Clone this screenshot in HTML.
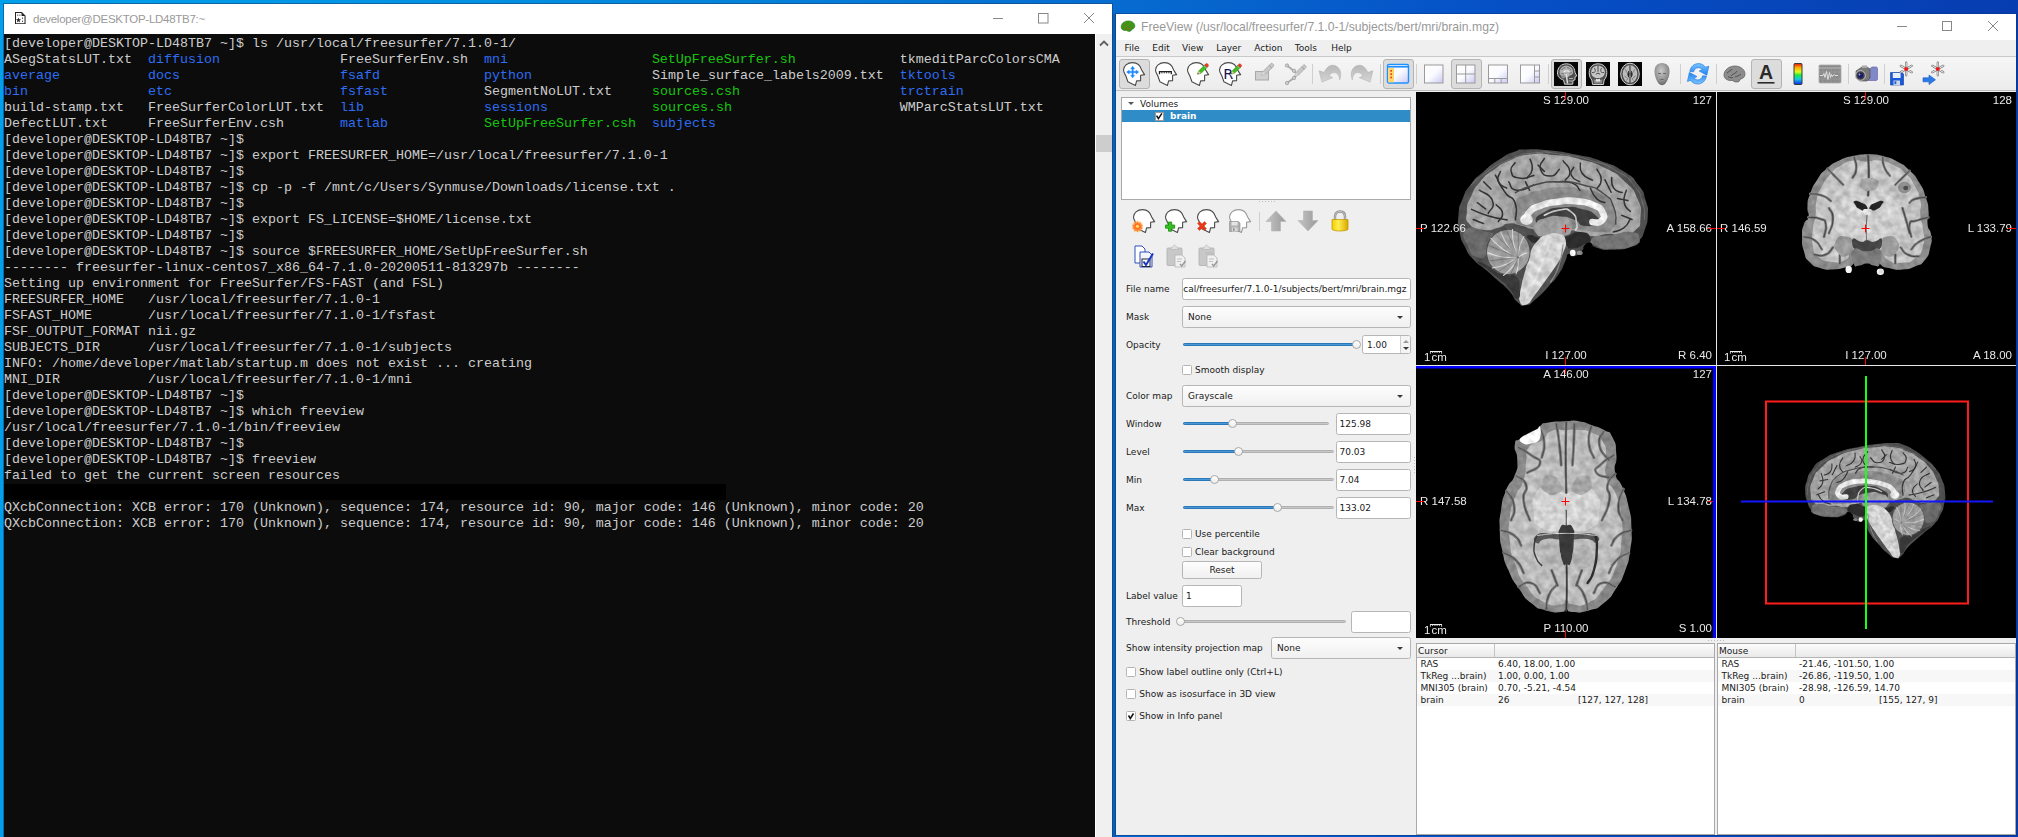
<!DOCTYPE html>
<html lang="en">
<head>
<meta charset="utf-8">
<title>developer@DESKTOP-LD48TB7:~ / FreeView</title>
<style>
html,body{margin:0;padding:0;}
body{width:2018px;height:837px;overflow:hidden;position:relative;
 background:linear-gradient(90deg,#02a0ea 0px,#0390e0 500px,#066cd0 1113px,#0650c6 1500px,#073db0 2018px);
 font-family:"DejaVu Sans","Liberation Sans",sans-serif;font-size:9px;color:#1a1a1a;}
.abs{position:absolute;}
/* ---------- terminal window ---------- */
#term{position:absolute;left:4px;top:4px;width:1108px;height:833px;background:#fff;box-shadow:0 0 0 1px rgba(20,60,110,.55);}
#term .tbar{position:absolute;left:0;top:0;width:1108px;height:30px;background:#fff;}
#term .ttl{position:absolute;left:29px;top:7px;font-family:"Liberation Sans",sans-serif;font-size:11.5px;letter-spacing:-0.27px;line-height:16px;color:#999;white-space:pre;}
#tbody{position:absolute;left:0;top:30px;width:1091px;height:803px;background:#0c0c0c;overflow:hidden;}
#tbody pre{position:absolute;left:0;top:1.5px;margin:0;font-family:"Liberation Mono",monospace;font-size:13.333px;line-height:16px;color:#cccccc;white-space:pre;letter-spacing:0;}
#tbody .b{color:#2f6df5;}
#tbody .g{color:#16c60c;}
#tsb{position:absolute;left:1092px;top:30px;width:16px;height:803px;background:#f0f0f0;}
#tsb .thumb{position:absolute;left:0;top:101px;width:16px;height:17px;background:#cdcdcd;}
/* ---------- freeview window ---------- */
#fv{position:absolute;left:1116px;top:14px;width:900px;height:821px;background:#efefef;box-shadow:0 0 0 1px rgba(10,50,120,.5);}
#fv .tbar{position:absolute;left:0;top:0;width:900px;height:26px;background:#fff;}
#fv .ttl{position:absolute;left:25px;top:5px;font-family:"Liberation Sans",sans-serif;font-size:12.2px;line-height:16px;color:#999;white-space:pre;}
#menubar{position:absolute;left:0;top:26px;width:899px;height:16px;background:#efefef;}
#menubar span{position:absolute;top:2px;line-height:12px;white-space:pre;}
#toolbar{position:absolute;left:0;top:42px;width:900px;height:35px;background:linear-gradient(#f6f6f6,#ececec);border-top:1px solid #c9c9c9;border-bottom:1px solid #bdbdbd;box-sizing:border-box;}
.tbtn{position:absolute;top:2px;width:31px;height:30px;box-sizing:border-box;border:1px solid #b4b4b4;border-radius:3px;background:#dcdcdc;}
.tsep{position:absolute;top:7px;width:1px;height:20px;background:#cfcfcf;}
.ico{position:absolute;width:24px;height:24px;overflow:visible;}
.lbl{position:absolute;line-height:12px;white-space:pre;color:#1a1a1a;}
.inp{position:absolute;box-sizing:border-box;background:#fff;border:1px solid #b6b6b6;border-radius:2.5px;line-height:12px;white-space:pre;overflow:hidden;}
.inp span{position:absolute;top:4px;}
.cmb{position:absolute;box-sizing:border-box;border:1px solid #b6b6b6;border-radius:2.5px;background:linear-gradient(#fdfdfd,#f0f0f0);line-height:12px;}
.cmb span{position:absolute;left:5px;top:4px;}
.cmb i{position:absolute;right:7px;top:8.500px;width:0;height:0;border-left:3.200px solid transparent;border-right:3.200px solid transparent;border-top:3.500px solid #3a3a3a;}
.chk{position:absolute;width:10px;height:10px;box-sizing:border-box;background:#fff;border:1px solid #b4b4b4;border-radius:1.5px;}
.grv{position:absolute;height:3px;box-sizing:border-box;border:1px solid #b0b0b0;border-radius:1.5px;background:#c8c8c8;}
.grvb{position:absolute;height:3px;box-sizing:border-box;border:1px solid #2a78b8;border-radius:1.5px;background:#4a98d8;}
.hdl{position:absolute;width:9px;height:9px;box-sizing:border-box;border:1px solid #a8a8a8;border-radius:5px;background:linear-gradient(#fff,#ececec);}

#views{position:absolute;left:300px;top:78px;width:600px;height:546px;background:#000;overflow:hidden;}
#views text{font-family:"Liberation Sans","DejaVu Sans",sans-serif;font-size:11.5px;fill:#ededed;}

.tbl{position:absolute;box-sizing:border-box;background:#fff;border:1px solid #a9a9a9;overflow:hidden;}
.tbl .hd{position:absolute;left:0;top:0;right:0;height:13px;background:linear-gradient(#fcfcfc,#f1f1f1 60%,#e9e9e9);border-bottom:1px solid #b4b4b4;}
.tbl .hd i{position:absolute;left:77px;top:0;width:1px;height:13px;background:#c4c4c4;}
.tbl .hd span{position:absolute;left:1px;top:1px;line-height:12px;}
.tbl .row{position:absolute;left:0;right:0;height:12px;line-height:12px;white-space:pre;}
.tbl .row.alt{background:#f7f7f7;}
.tbl .row span{position:absolute;top:0;}

</style>
</head>
<body>
<div id="gapshade" style="position:absolute;left:1112px;top:14px;width:4px;height:823px;background:rgba(10,40,90,.16)"></div>
<!-- ================= TERMINAL WINDOW ================= -->
<div id="term">
 <div class="tbar">
  <svg class="abs" style="left:11px;top:8px" width="10.500" height="12.200" viewBox="0 0 12 14"><path d="M0.5 0.5H7.5L11.5 4.5V13.5H0.5Z" fill="#fff" stroke="#222" stroke-width="1.2"/><path d="M7.5 0.5V4.5H11.5Z" fill="#222"/><rect x="2.5" y="3" width="1.2" height="1.2" fill="#222"/><rect x="5" y="3" width="1.2" height="1.2" fill="#222"/><rect x="8" y="6.5" width="1.2" height="1.2" fill="#222"/><rect x="8" y="10" width="1.2" height="1.2" fill="#222"/><path d="M4 6.2L4.8 8.4H7L5.2 9.7L5.9 12L4 10.6L2.1 12L2.8 9.7L1 8.4H3.2Z" fill="#222"/></svg>
  <div class="ttl">developer@DESKTOP-LD48TB7:~</div>
  <svg class="abs" style="left:987px;top:8px" width="110" height="14" viewBox="0 0 110 14" fill="none" stroke="#888" stroke-width="1"><path d="M2 6.5H12"/><rect x="47.500" y="1.500" width="9.500" height="9.500"/><path d="M93 1L103 11M103 1L93 11"/></svg>
 </div>
 <div id="tbody">
<pre>[developer@DESKTOP-LD48TB7 ~]$ ls /usr/local/freesurfer/7.1.0-1/
ASegStatsLUT.txt  <span class="b">diffusion</span>               FreeSurferEnv.sh  <span class="b">mni</span>                  <span class="g">SetUpFreeSurfer.sh</span>             tkmeditParcColorsCMA
<span class="b">average</span>           <span class="b">docs</span>                    <span class="b">fsafd</span>             <span class="b">python</span>               Simple_surface_labels2009.txt  <span class="b">tktools</span>
<span class="b">bin</span>               <span class="b">etc</span>                     <span class="b">fsfast</span>            SegmentNoLUT.txt     <span class="g">sources.csh</span>                    <span class="b">trctrain</span>
build-stamp.txt   FreeSurferColorLUT.txt  <span class="b">lib</span>               <span class="b">sessions</span>             <span class="g">sources.sh</span>                     WMParcStatsLUT.txt
DefectLUT.txt     FreeSurferEnv.csh       <span class="b">matlab</span>            <span class="g">SetUpFreeSurfer.csh</span>  <span class="b">subjects</span>
[developer@DESKTOP-LD48TB7 ~]$
[developer@DESKTOP-LD48TB7 ~]$ export FREESURFER_HOME=/usr/local/freesurfer/7.1.0-1
[developer@DESKTOP-LD48TB7 ~]$
[developer@DESKTOP-LD48TB7 ~]$ cp -p -f /mnt/c/Users/Synmuse/Downloads/license.txt .
[developer@DESKTOP-LD48TB7 ~]$
[developer@DESKTOP-LD48TB7 ~]$ export FS_LICENSE=$HOME/license.txt
[developer@DESKTOP-LD48TB7 ~]$
[developer@DESKTOP-LD48TB7 ~]$ source $FREESURFER_HOME/SetUpFreeSurfer.sh
-------- freesurfer-linux-centos7_x86_64-7.1.0-20200511-813297b --------
Setting up environment for FreeSurfer/FS-FAST (and FSL)
FREESURFER_HOME   /usr/local/freesurfer/7.1.0-1
FSFAST_HOME       /usr/local/freesurfer/7.1.0-1/fsfast
FSF_OUTPUT_FORMAT nii.gz
SUBJECTS_DIR      /usr/local/freesurfer/7.1.0-1/subjects
INFO: /home/developer/matlab/startup.m does not exist ... creating
MNI_DIR           /usr/local/freesurfer/7.1.0-1/mni
[developer@DESKTOP-LD48TB7 ~]$
[developer@DESKTOP-LD48TB7 ~]$ which freeview
/usr/local/freesurfer/7.1.0-1/bin/freeview
[developer@DESKTOP-LD48TB7 ~]$
[developer@DESKTOP-LD48TB7 ~]$ freeview
failed to get the current screen resources

QXcbConnection: XCB error: 170 (Unknown), sequence: 174, resource id: 90, major code: 146 (Unknown), minor code: 20
QXcbConnection: XCB error: 170 (Unknown), sequence: 174, resource id: 90, major code: 146 (Unknown), minor code: 20</pre>
  <div class="abs" style="left:0;top:450px;width:722px;height:16px;background:#000"></div>
 </div>
 <div id="tsb"><div class="thumb"></div>
  <svg class="abs" style="left:3px;top:5px" width="10" height="8" viewBox="0 0 10 8"><path d="M1 6.5L5 2.5L9 6.5" fill="none" stroke="#606060" stroke-width="1.8"/></svg>
 </div>
</div>
<!-- ================= FREEVIEW WINDOW ================= -->
<div id="fv">
 <div class="tbar">
  <svg class="abs" style="left:4px;top:6px" width="16" height="12.500" viewBox="0 0 17 14"><path d="M.8 8C.8 3.500 4.500 1 9 1c4 0 7.200 2.500 7.200 5.500 0 2-1.200 3.300-3 3.800l-1.500 2c-1.500.8-3.500.5-4.700-.6C3.500 12 .8 10.800.8 8z" fill="#3a9a18" stroke="#2a6a12" stroke-width=".6"/><path d="M3.500 6.500c1.500-1.500 3-1.500 4-3M6.500 9c1.500-2 3.500-1.500 4.500-3.500M9.500 10c1.500-.8 3-.8 4.500-2.200M3.500 9.200c1 .8 2.500 1 4 .6" stroke="#d83020" stroke-width=".9" fill="none" stroke-dasharray="1.200 1"/></svg>
  <div class="ttl">FreeView (/usr/local/freesurfer/7.1.0-1/subjects/bert/mri/brain.mgz)</div>
  <svg class="abs" style="left:779px;top:6px" width="110" height="14" viewBox="0 0 110 14" fill="none" stroke="#888" stroke-width="1"><path d="M2 6.500H12"/><rect x="47.500" y="1.500" width="9" height="9"/><path d="M93 1L103 11M103 1L93 11"/></svg>
 </div>
 <div id="menubar">
  <span style="left:8.4px">File</span>
  <span style="left:36.3px">Edit</span>
  <span style="left:66px">View</span>
  <span style="left:100.2px">Layer</span>
  <span style="left:138.2px">Action</span>
  <span style="left:178.8px">Tools</span>
  <span style="left:215.2px">Help</span>
 </div>
 <div id="toolbar">
 </div>
 <div class="tbtn" style="left:2.5px;top:45px"></div>
 <div class="tbtn" style="left:266.5px;top:45px"></div>
 <div class="tbtn" style="left:334.5px;top:45px"></div>
 <div class="tbtn" style="left:434.5px;top:45px"></div>
 <div class="tbtn" style="left:634.5px;top:45px"></div>
 <div class="tsep" style="left:196px;top:50px"></div>
 <div class="tsep" style="left:264px;top:50px"></div>
 <div class="tsep" style="left:300px;top:50px"></div>
 <div class="tsep" style="left:432px;top:50px"></div>
 <div class="tsep" style="left:564px;top:50px"></div>
 <div class="tsep" style="left:600px;top:50px"></div>
 <div class="tsep" style="left:732px;top:50px"></div>
 <div class="tsep" style="left:768px;top:50px"></div>
 <svg class="ico" style="left:6px;top:48px" width="24" height="24" viewBox="0 0 24 24"><path d="M10.7 0.6C5.2 0.6 1.5 4 1.5 8.100c0 2.300 1.200 3.600 2.200 5.400L5.900 19.800l7.500 3.700 1.200-4.600 4-.3v-5.400l4-.6c-1.200-1.800-2.200-3.100-2.900-4.600C18.400 3.800 15.700.6 10.700.6z" fill="#fff" stroke="#4a4a4a" stroke-width="1.1" stroke-linejoin="round" opacity="1"/><g fill="#1e88ff" stroke="#1e88ff" stroke-width=".3" transform="translate(1.700 0.200) scale(0.920)"><path d="M9.700 4.200l2.300 3.200h-1.500v2.500h2.800V8.400l3.200 2.300-3.200 2.300v-1.500h-2.800v2.600H12l-2.300 3.200-2.300-3.200h1.500v-2.600H6.100V13l-3.200-2.300 3.200-2.300v1.500h2.800V7.400H7.400z"/></g></svg>
 <svg class="ico" style="left:38px;top:48px" width="24" height="24" viewBox="0 0 24 24"><path d="M10.7 0.6C5.2 0.6 1.5 4 1.5 8.100c0 2.300 1.200 3.600 2.200 5.400L5.900 19.800l7.500 3.700 1.200-4.600 4-.3v-5.400l4-.6c-1.200-1.800-2.200-3.100-2.900-4.600C18.400 3.800 15.700.6 10.700.6z" fill="#fff" stroke="#4a4a4a" stroke-width="1.1" stroke-linejoin="round" opacity="1"/><path d="M5.500 12.300V9.600h11.800v2.700" fill="none" stroke="#222" stroke-width="1.3"/><path d="M7.900 9.800v1.600M10.200 9.800v1.600M12.600 9.800v1.600M14.900 9.800v1.600" stroke="#222" stroke-width=".9"/></svg>
 <svg class="ico" style="left:70px;top:48px" width="24" height="24" viewBox="0 0 24 24"><path d="M10.7 0.6C5.2 0.6 1.5 4 1.5 8.100c0 2.300 1.200 3.600 2.200 5.400L5.900 19.800l7.500 3.700 1.200-4.600 4-.3v-5.400l4-.6c-1.200-1.800-2.200-3.100-2.900-4.600C18.400 3.800 15.700.6 10.700.6z" fill="#fff" stroke="#4a4a4a" stroke-width="1.1" stroke-linejoin="round" opacity="1"/><g transform="translate(10.5 1.2) scale(0.95)"><path d="M1 11.5L2.300 8.200 8.500 2 11 4.500 4.800 10.700z" fill="#3fc01c" stroke="#2a8a10" stroke-width=".6"/><path d="M1 11.500l1.300-3.300 2.500 2.500z" fill="#e8c9a0"/><path d="M1 11.500l.6-1.500 1 1z" fill="#444"/><path d="M8.500 2l1.300-1.300c.5-.5 1.200-.5 1.700 0l.8.800c.5.500.5 1.200 0 1.700L11 4.500z" fill="#e83c1c" stroke="#a82a10" stroke-width=".5"/><path d="M8 2.600l2.500 2.500" stroke="#b8b8d0" stroke-width=".9"/></g></svg>
 <svg class="ico" style="left:102px;top:48px" width="24" height="24" viewBox="0 0 24 24"><path d="M10.7 0.6C5.2 0.6 1.5 4 1.5 8.100c0 2.300 1.200 3.600 2.200 5.400L5.900 19.800l7.500 3.700 1.200-4.600 4-.3v-5.400l4-.6c-1.200-1.800-2.200-3.100-2.900-4.600C18.400 3.800 15.700.6 10.700.6z" fill="#fff" stroke="#4a4a4a" stroke-width="1.1" stroke-linejoin="round" opacity="1"/><text x="5.200" y="16.500" font-family="DejaVu Sans,Liberation Sans,sans-serif" font-size="14.500" fill="#14145a">R</text><g transform="translate(12 1.5) scale(0.92)"><path d="M1 11.5L2.300 8.200 8.500 2 11 4.500 4.800 10.700z" fill="#3fc01c" stroke="#2a8a10" stroke-width=".6"/><path d="M1 11.500l1.300-3.300 2.500 2.500z" fill="#e8c9a0"/><path d="M1 11.500l.6-1.500 1 1z" fill="#444"/><path d="M8.500 2l1.300-1.300c.5-.5 1.200-.5 1.700 0l.8.800c.5.500.5 1.200 0 1.700L11 4.500z" fill="#e83c1c" stroke="#a82a10" stroke-width=".5"/><path d="M8 2.600l2.500 2.500" stroke="#b8b8d0" stroke-width=".9"/></g></svg>
 <svg class="ico" style="left:134px;top:48px" width="24" height="24" viewBox="0 0 24 24"><rect x="5.500" y="9.500" width="13" height="8.500" fill="#cfcfcf" stroke="#a8a8a8"/><g transform="translate(10.5 1) scale(1.05)"><path d="M1 11.5L2.300 8.200 9.800.7c.5-.5 1.200-.5 1.700 0l.8.800c.5.500.5 1.200 0 1.700L4.800 10.700z" fill="#c8c8c8" stroke="#a0a0a0" stroke-width=".7"/><path d="M1 11.500l1.300-3.300 2.500 2.500z" fill="#dcdcdc"/><path d="M8.300 2.300l2.500 2.500" stroke="#9a9a9a" stroke-width=".8"/></g></svg>
 <svg class="ico" style="left:166px;top:48px" width="24" height="24" viewBox="0 0 24 24"><path d="M5 3.500l7 5.500M5 21l7-5M12 9l3.500 3.500L12 16" fill="none" stroke="#a8a8a8" stroke-width="1.600"/><circle cx="5" cy="3.500" r="1.700" fill="#ccc" stroke="#9a9a9a" stroke-width=".7"/><circle cx="12" cy="8.800" r="1.700" fill="#ccc" stroke="#9a9a9a" stroke-width=".7"/><circle cx="12" cy="16" r="1.700" fill="#ccc" stroke="#9a9a9a" stroke-width=".7"/><circle cx="5" cy="21" r="1.700" fill="#ccc" stroke="#9a9a9a" stroke-width=".7"/><g transform="translate(11.5 2.5) scale(1.0)"><path d="M1 11.5L2.300 8.200 9.800.7c.5-.5 1.200-.5 1.700 0l.8.800c.5.500.5 1.200 0 1.700L4.800 10.700z" fill="#c8c8c8" stroke="#a0a0a0" stroke-width=".7"/><path d="M1 11.500l1.300-3.300 2.500 2.500z" fill="#dcdcdc"/><path d="M8.300 2.300l2.500 2.500" stroke="#9a9a9a" stroke-width=".8"/></g></svg>
 <svg class="ico" style="left:202px;top:48px" width="24" height="24" viewBox="0 0 24 24"><linearGradient id="gun" x1="0" y1="0" x2="0" y2="1"><stop offset="0" stop-color="#b8b8b8"/><stop offset="1" stop-color="#d4d4d4"/></linearGradient><path d="M1.100 8.800L4 20.100l10.700-4.500-3.500-1.600c1.300-3.500 5.800-4.500 8.300-2 1.300 1.500 2 3.500 2.200 5.800 2.300-5.800.8-11.800-4.200-14C13 2 8.500 4.500 6.300 10.500z" fill="url(#gun)" stroke="#b4b4b4" stroke-width=".6" stroke-linejoin="round"/></svg>
 <svg class="ico" style="left:234px;top:48px" width="24" height="24" viewBox="0 0 24 24"><linearGradient id="gre" x1="0" y1="0" x2="0" y2="1"><stop offset="0" stop-color="#b8b8b8"/><stop offset="1" stop-color="#d4d4d4"/></linearGradient><g transform="translate(24 0) scale(-1 1)"><path d="M1.100 8.800L4 20.100l10.700-4.500-3.500-1.600c1.300-3.500 5.800-4.500 8.300-2 1.300 1.500 2 3.500 2.200 5.800 2.300-5.800.8-11.800-4.200-14C13 2 8.500 4.500 6.300 10.500z" fill="url(#gre)" stroke="#b4b4b4" stroke-width=".6" stroke-linejoin="round"/></g></svg>
 <svg class="ico" style="left:270px;top:48px" width="24" height="24" viewBox="0 0 24 24"><linearGradient id="gp0" x1="0" y1="0" x2="1" y2="1"><stop offset="0" stop-color="#fff"/><stop offset=".5" stop-color="#fbfbff"/><stop offset="1" stop-color="#c9c9f4"/></linearGradient><rect x="1.500" y="2.500" width="21" height="18.500" rx="1.500" fill="url(#gp0)" stroke="#1e90ff" stroke-width="1.400"/><path d="M1.500 4.800h21" stroke="#1e90ff" stroke-width="1.600"/><rect x="2.300" y="6" width="5.700" height="14.300" fill="#ffd76a"/><rect x="4.300" y="8" width="1.700" height="1.700" fill="#e8402a"/><rect x="4.300" y="11.300" width="1.700" height="1.700" fill="#e8402a"/><rect x="4.300" y="14.600" width="1.700" height="1.700" fill="#e8402a"/></svg>
 <svg class="ico" style="left:305.5px;top:48px" width="24" height="24" viewBox="0 0 24 24"><linearGradient id="gp1" x1="0" y1="0" x2="1" y2="1"><stop offset="0" stop-color="#fff"/><stop offset=".5" stop-color="#fbfbff"/><stop offset="1" stop-color="#c9c9f4"/></linearGradient><rect x="2.500" y="3" width="18.500" height="18" fill="url(#gp1)" stroke="#9a9a9a" stroke-width="1"/></svg>
 <svg class="ico" style="left:338px;top:48px" width="24" height="24" viewBox="0 0 24 24"><linearGradient id="gp2" x1="0" y1="0" x2="1" y2="1"><stop offset="0" stop-color="#fff"/><stop offset=".5" stop-color="#fbfbff"/><stop offset="1" stop-color="#c9c9f4"/></linearGradient><rect x="2.500" y="3" width="18.500" height="18" fill="url(#gp2)" stroke="#9a9a9a" stroke-width="1"/><path d="M11.700 3v18M2.500 12h18.500" stroke="#9a9a9a"/></svg>
 <svg class="ico" style="left:370px;top:48px" width="24" height="24" viewBox="0 0 24 24"><linearGradient id="gp3" x1="0" y1="0" x2="1" y2="1"><stop offset="0" stop-color="#fff"/><stop offset=".5" stop-color="#fbfbff"/><stop offset="1" stop-color="#c9c9f4"/></linearGradient><rect x="2.500" y="3" width="19" height="18" fill="url(#gp3)" stroke="#9a9a9a" stroke-width="1"/><path d="M2.500 16.500h19M8.800 16.500V21M15.200 16.500V21" stroke="#9a9a9a"/></svg>
 <svg class="ico" style="left:402px;top:48px" width="24" height="24" viewBox="0 0 24 24"><linearGradient id="gp4" x1="0" y1="0" x2="1" y2="1"><stop offset="0" stop-color="#fff"/><stop offset=".5" stop-color="#fbfbff"/><stop offset="1" stop-color="#c9c9f4"/></linearGradient><rect x="2.500" y="3" width="19" height="18" fill="url(#gp4)" stroke="#9a9a9a" stroke-width="1"/><path d="M16.500 3v18M16.500 9h5M16.500 15h5" stroke="#9a9a9a"/></svg>
 <svg class="ico" style="left:438px;top:48px" width="24" height="24" viewBox="0 0 24 24"><rect x="0" y="0" width="24" height="24" fill="#060606"/><path d="M3.500 11C3.500 5.200 7.500 1.800 12.300 1.800S20.600 5 21 10.300l1.700 3.700-1.700 1v2.800l-2 .7-.3 3.700H10.500L9.600 18C6 17 3.500 14.800 3.500 11z" fill="#4e4e4e" stroke="#cfcfcf" stroke-width="1"/><path d="M5.600 10.600C5.600 6.200 8.700 3.800 12.300 3.800s6.600 2.200 6.800 6c.1 2.200-1.300 3.400-3.300 3.600l-2 1.800H10.500C7.600 14.600 5.600 13.200 5.600 10.600z" fill="#b2b2b2"/><path d="M7.500 8c1-1.500 2.500-2.300 4-2.300M13 5.500c1.800.2 3.500 1.300 4 3M7 11c1 .8 2 1 3 .8M15.500 11.500c1-.2 2-.8 2.600-1.800" stroke="#5a5a5a" stroke-width=".8" fill="none"/><path d="M9.500 10.200c1-1.600 4.200-1.900 5.800-.4" fill="none" stroke="#f0f0f0" stroke-width="1.100"/><path d="M12.300 12c.2 3 .8 6 1.200 9.500" stroke="#dcdcdc" stroke-width="1.500" fill="none"/><ellipse cx="9.300" cy="14.800" rx="2.100" ry="1.600" fill="#8c8c8c"/><path d="M15 16.500h4M14.500 19h4" stroke="#bdbdbd" stroke-width=".9"/></svg>
 <svg class="ico" style="left:470px;top:48px" width="24" height="24" viewBox="0 0 24 24"><rect x="0" y="0" width="24" height="24" fill="#060606"/><path d="M12 1.800c5.300 0 8.800 3.400 8.800 8.700 0 3.600-1.200 6-2.600 7.500l-.8 4.500H6.600l-.8-4.500C4.400 16.500 3.200 14.100 3.200 10.500 3.200 5.200 6.700 1.800 12 1.800z" fill="#4e4e4e" stroke="#cfcfcf" stroke-width="1"/><path d="M12 3.800c4 0 6.800 2.500 6.800 6.400 0 3.600-2.600 5.800-6.800 5.800s-6.800-2.200-6.800-5.800C5.200 6.300 8 3.800 12 3.800z" fill="#c6c6c6"/><path d="M12 3.800v6M8.300 6c.8 1 1.200 2.400.8 3.700M15.700 6c-.8 1-1.200 2.400-.8 3.700M6 10.500c1 .3 2 .2 2.800-.3M18 10.500c-1 .3-2 .2-2.800-.3M9.800 12.300l2.200-1.200 2.200 1.200" stroke="#3c3c3c" stroke-width=".9" fill="none"/><path d="M7.500 17c2 1.600 7 1.600 9 0l-.7 4.500H8.200z" fill="#8a8a8a"/><path d="M10 16.500c1 1 3 1 4 0l.3 3h-4.600z" fill="#e4e4e4"/></svg>
 <svg class="ico" style="left:502px;top:48px" width="24" height="24" viewBox="0 0 24 24"><rect x="0" y="0" width="24" height="24" fill="#060606"/><ellipse cx="12" cy="12" rx="9.300" ry="10.800" fill="#4e4e4e" stroke="#cfcfcf" stroke-width="1"/><ellipse cx="12" cy="12" rx="7.300" ry="8.900" fill="#bcbcbc"/><path d="M12 3.200v6M12 15v6M10.800 9.200c-1.300 1.800-1.300 4.200 0 6 .5-2 .5-4 0-6zM13.200 9.200c1.300 1.800 1.300 4.200 0 6-.5-2-.5-4 0-6z" stroke="#2e2e2e" stroke-width="1" fill="#2e2e2e"/><path d="M7 7c1 1 1.500 2.200 1.200 3.500M17 7c-1 1-1.500 2.200-1.200 3.500M6.500 14c1 .3 1.800 1 2 2M17.500 14c-1 .3-1.800 1-2 2M8.500 18.500c.8-.8 1.200-1.600 1.200-2.500M15.500 18.500c-.8-.8-1.200-1.600-1.200-2.500" stroke="#6a6a6a" stroke-width=".8" fill="none"/></svg>
 <svg class="ico" style="left:534px;top:48px" width="24" height="24" viewBox="0 0 24 24"><radialGradient id="gh3" cx=".45" cy=".35" r=".7"><stop offset="0" stop-color="#c8c8c8"/><stop offset=".7" stop-color="#8c8c8c"/><stop offset="1" stop-color="#5a5a5a"/></radialGradient><path d="M12 1c5 0 7.500 3.500 7.500 8.500 0 5-2.500 10-4.500 12.500-1.500 1.500-4.500 1.500-6 0C7 19.500 4.500 14.500 4.500 9.500 4.500 4.500 7 1 12 1z" fill="url(#gh3)"/><path d="M8 11.500h3M13 11.500h3M10.500 17.500h3" stroke="#555" stroke-width=".8"/></svg>
 <svg class="ico" style="left:570px;top:48px" width="24" height="24" viewBox="0 0 24 24"><linearGradient id="grf" x1="0" y1="0" x2="0" y2="1"><stop offset="0" stop-color="#7cc4ff"/><stop offset="1" stop-color="#1c84f4"/></linearGradient><g fill="url(#grf)" stroke="#1a74dc" stroke-width=".6" stroke-linejoin="round"><path d="M3.800 9.500C4.500 4.500 8.500 1.300 13 1.600c2.800.2 5 1.600 6.500 3.600l3.300-1-2 9L13.200 9l3-1.400c-1-1.200-2.200-1.800-3.700-1.900-2.500-.1-4.300 1.500-4.900 4.100z"/><path d="M3.800 9.500C4.500 4.500 8.500 1.300 13 1.600c2.800.2 5 1.600 6.500 3.600l3.300-1-2 9L13.200 9l3-1.400c-1-1.200-2.200-1.800-3.700-1.900-2.500-.1-4.300 1.500-4.900 4.100z" transform="rotate(180 12.100 11.800)"/></g></svg>
 <svg class="ico" style="left:606px;top:48px" width="24" height="24" viewBox="0 0 24 24"><path d="M2 13c0-5 5-9 11-9s10 4 10 8c0 3-2 4.500-4.500 5L17 19.500c-2 1-5 .5-6.500-1C6 19 2 17 2 13z" fill="#8c8c8c" stroke="#5a5a5a" stroke-width=".7"/><path d="M5 11c2-2 4-2 5-4M9 14c2-3 5-2 6-5M13 15c2-1 4-1 6-3M6 14.500c1 1 3 1.500 5 1" stroke="#4a4a4a" stroke-width=".9" fill="none"/></svg>
 <svg class="ico" style="left:638px;top:48px" width="24" height="24" viewBox="0 0 24 24"><text x="12" y="17" text-anchor="middle" font-family="Liberation Sans,DejaVu Sans,sans-serif" font-size="19.500" font-weight="bold" fill="#2a2a2a">A</text><path d="M3.500 20.800h17" stroke="#2a2a2a" stroke-width="1.600"/></svg>
 <svg class="ico" style="left:669.5px;top:48px" width="24" height="24" viewBox="0 0 24 24"><linearGradient id="gcb" x1="0" y1="0" x2="0" y2="1"><stop offset="0" stop-color="#e81010"/><stop offset=".2" stop-color="#ffb000"/><stop offset=".4" stop-color="#d8ff20"/><stop offset=".55" stop-color="#20e840"/><stop offset=".75" stop-color="#10c8e8"/><stop offset="1" stop-color="#1020e8"/></linearGradient><rect x="8" y="1.500" width="8" height="21" rx="1" fill="url(#gcb)" stroke="#3a3a3a" stroke-width="1"/></svg>
 <svg class="ico" style="left:702px;top:48px" width="24" height="24" viewBox="0 0 24 24"><rect x="1" y="3" width="22" height="18" rx="1" fill="#8a8a8a" stroke="#aaa" stroke-width=".8"/><path d="M1 6h22" stroke="#bbb"/><path d="M5 6v15M9 6v15M13 6v15M17 6v15M21 6v15M1 10h22M1 17h22" stroke="#9e9e9e" stroke-width=".6"/><path d="M2 13.500h3l1-2 1 4 1.500-6 1.500 8 1.500-7 1 5 1-3 1 2 1.500-2 1 1h3" stroke="#e8e8e8" stroke-width=".9" fill="none"/></svg>
 <svg class="ico" style="left:738px;top:48px" width="24" height="24" viewBox="0 0 24 24"><path d="M14 8l4-3h4c.8 0 1.500.7 1.500 1.500V17c0 .8-.7 1.500-1.500 1.500h-8z" fill="#8088c8" stroke="#5a60a0" stroke-width=".6"/><path d="M2 9l6-4h5l3 2v9l-3 3H6l-4-3z" fill="#7a7a7a" stroke="#444" stroke-width=".6"/><rect x="8" y="3.500" width="5" height="2.500" fill="#aaa"/><circle cx="6.500" cy="13.500" r="4.800" fill="#3a3a4a" stroke="#ccc" stroke-width="1"/><circle cx="6.500" cy="13.500" r="2.500" fill="#1a1a6a"/><circle cx="5.500" cy="12.500" r=".9" fill="#9ab"/></svg>
 <svg class="ico" style="left:773px;top:48px" width="24" height="24" viewBox="0 0 24 24"><path d="M1.500 10.500h11.500l1.500 1.500V23H1.500z" fill="#1a5ad8" stroke="#0a3aa0" stroke-width=".6"/><rect x="3.800" y="11" width="7.800" height="5" fill="#e8eef8"/><rect x="4.500" y="18.500" width="6.500" height="4.500" fill="#d0d8e8"/><rect x="5.500" y="19.300" width="1.800" height="2.800" fill="#1a5ad8"/><g transform="translate(17.2 7)"><path d="M0-6.300v12.600M-5.500-3.200l11 6.400M-5.500 3.200l11-6.400" stroke="#6a6a6a" stroke-width="2.200" stroke-linecap="round"/><path d="M0-6.300v12.600M-5.500-3.200l11 6.400M-5.500 3.200l11-6.400" stroke="#e6e6e6" stroke-width="1.100" stroke-linecap="round"/><circle r="2.100" fill="#e81c1c"/></g></svg>
 <svg class="ico" style="left:805px;top:48px" width="24" height="24" viewBox="0 0 24 24"><path d="M2 15.800h6V13l6.500 4.800L8 22.600v-2.800H2z" fill="#2a7ae8" stroke="#1a5ac0" stroke-width=".6"/><g transform="translate(16.8 7)"><path d="M0-6.300v12.600M-5.500-3.200l11 6.400M-5.500 3.200l11-6.400" stroke="#6a6a6a" stroke-width="2.200" stroke-linecap="round"/><path d="M0-6.300v12.600M-5.500-3.200l11 6.400M-5.500 3.200l11-6.400" stroke="#e6e6e6" stroke-width="1.100" stroke-linecap="round"/><circle r="2.100" fill="#e81c1c"/></g></svg>
<!-- ---- left control panel ---- -->
<div class="abs" style="left:5px;top:83px;width:290px;height:103px;box-sizing:border-box;background:#fff;border:1px solid #a9a9a9;">
 <div class="abs" style="left:5.500px;top:4px;width:0;height:0;border-left:3px solid transparent;border-right:3px solid transparent;border-top:3.500px solid #555"></div>
 <div class="lbl" style="left:18px;top:-0.500px">Volumes</div>
 <div class="abs" style="left:0;top:12px;width:288px;height:12px;background:#308cc6"></div>
 <div class="abs" style="left:33px;top:14px;width:8.500px;height:8.500px;background:#fff;border:0.500px solid #9a9a9a;box-sizing:border-box"></div>
 <svg class="abs" style="left:33px;top:14px" width="8.500" height="8.500" viewBox="0 0 8 8"><path d="M1.500 3.500L3.200 6.300 6.500 1.300" fill="none" stroke="#111" stroke-width="1.400"/></svg>
 <div class="lbl" style="left:48px;top:12px;color:#fff;font-weight:bold">brain</div>
</div>
<div class="abs" style="left:143px;top:187px;width:17px;height:1px;background:repeating-linear-gradient(90deg,#bdbdbd 0 1px,transparent 1px 3px)"></div>
<svg class="ico" style="left:15.5px;top:194.7px" width="24" height="24" viewBox="0 0 24 24"><path d="M10.7 0.6C5.2 0.6 1.5 4 1.5 8.100c0 2.300 1.200 3.600 2.200 5.400L5.900 19.800l7.500 3.700 1.200-4.600 4-.3v-5.400l4-.6c-1.200-1.800-2.200-3.100-2.900-4.600C18.400 3.800 15.700.6 10.700.6z" fill="#fff" stroke="#4a4a4a" stroke-width="1.1" stroke-linejoin="round" opacity="1"/><circle cx="5.500" cy="17.300" r="5.600" fill="#ffc060" opacity=".6"/><path d="M5.500 11.300l1.300 2.300 2.400-1 .1 2.600 2.500.700-1.500 2.100 1.500 2.100-2.500.700-.1 2.600-2.400-1-1.300 2.300-1.300-2.300-2.400 1-.1-2.600-2.500-.700 1.500-2.100-1.500-2.100 2.500-.700.1-2.600 2.400 1z" fill="#ff8a38" transform="translate(0.800 2.500) scale(.850)"/><circle cx="5.500" cy="17.300" r="3" fill="#ff6a28"/><circle cx="5.500" cy="17.300" r="1.600" fill="#ffe060"/></svg>
<svg class="ico" style="left:47.5px;top:194.7px" width="24" height="24" viewBox="0 0 24 24"><path d="M10.7 0.6C5.2 0.6 1.5 4 1.5 8.100c0 2.300 1.200 3.600 2.200 5.400L5.900 19.800l7.500 3.700 1.200-4.600 4-.3v-5.400l4-.6c-1.200-1.800-2.200-3.100-2.900-4.600C18.400 3.800 15.700.6 10.700.6z" fill="#fff" stroke="#4a4a4a" stroke-width="1.1" stroke-linejoin="round" opacity="1"/><path d="M4.500 13h3.200v3h3v3.200h-3v3H4.500v-3h-3V16h3z" fill="#34c020" stroke="#1a8a10" stroke-width=".8"/></svg>
<svg class="ico" style="left:79.5px;top:194.7px" width="24" height="24" viewBox="0 0 24 24"><path d="M10.7 0.6C5.2 0.6 1.5 4 1.5 8.100c0 2.300 1.200 3.600 2.200 5.400L5.900 19.800l7.500 3.700 1.200-4.600 4-.3v-5.400l4-.6c-1.200-1.800-2.200-3.100-2.900-4.600C18.400 3.800 15.700.6 10.700.6z" fill="#fff" stroke="#4a4a4a" stroke-width="1.1" stroke-linejoin="round" opacity="1"/><path d="M1.500 14.500l2-2 2.500 2.500 2.500-2.500 2 2L8 17l2.500 2.500-2 2L6 19l-2.500 2.500-2-2L4 17z" fill="#e83818" stroke="#c02810" stroke-width=".4"/></svg>
<svg class="ico" style="left:111.5px;top:194.7px" width="24" height="24" viewBox="0 0 24 24"><path d="M10.7 0.6C5.2 0.6 1.5 4 1.5 8.100c0 2.300 1.200 3.600 2.200 5.400L5.900 19.800l7.500 3.700 1.200-4.600 4-.3v-5.400l4-.6c-1.200-1.800-2.200-3.100-2.900-4.600C18.400 3.800 15.700.6 10.700.6z" fill="#fff" stroke="#9a9a9a" stroke-width="1.1" stroke-linejoin="round" opacity="1"/><path d="M1.500 12.500h9l1.500 1.500v8.500H1.500z" fill="#b0b0b0" stroke="#8a8a8a" stroke-width=".6"/><rect x="3.500" y="13" width="6" height="3.500" fill="#e4e4e4"/><rect x="4" y="18.500" width="5.500" height="4" fill="#d8d8d8"/><rect x="5" y="19.300" width="1.600" height="2.400" fill="#8a8a8a"/></svg>
<svg class="ico" style="left:148px;top:194.5px" width="24" height="24" viewBox="0 0 24 24"><linearGradient id="gup" x1="0" y1="0" x2="1" y2="0"><stop offset="0" stop-color="#c4c4c4"/><stop offset="1" stop-color="#9a9a9a"/></linearGradient><path d="M12 2l10 10.500h-5.500V22h-9v-9.500H2z" fill="url(#gup)" stroke="#b4b4b4" stroke-width=".6"/></svg>
<svg class="ico" style="left:180px;top:194.5px" width="24" height="24" viewBox="0 0 24 24"><linearGradient id="gdn" x1="0" y1="0" x2="1" y2="0"><stop offset="0" stop-color="#c4c4c4"/><stop offset="1" stop-color="#9a9a9a"/></linearGradient><path d="M12 22L2 11.500h5.500V2h9v9.500H22z" fill="url(#gdn)" stroke="#b4b4b4" stroke-width=".6"/></svg>
<svg class="ico" style="left:212px;top:194.5px" width="24" height="24" viewBox="0 0 24 24"><path d="M7 11V7.500C7 4.500 9 2.500 12 2.500s5 2 5 5V11" fill="none" stroke="#8a8a8a" stroke-width="2.400"/><path d="M7 11V7.500C7 4.500 9 2.500 12 2.500s5 2 5 5V11" fill="none" stroke="#d0d0d0" stroke-width=".9"/><linearGradient id="glk" x1="0" y1="0" x2="1" y2="0"><stop offset="0" stop-color="#f0d000"/><stop offset=".4" stop-color="#ffee50"/><stop offset="1" stop-color="#d8a800"/></linearGradient><path d="M4 10.500h16v10c-3 2-13 2-16 0z" fill="url(#glk)" stroke="#c09000" stroke-width=".7"/></svg>
<div class="tsep" style="left:142.5px;top:198px;height:19px"></div>
<svg class="ico" style="left:16.5px;top:230px" width="23" height="23" viewBox="0 0 24 24"><path d="M2 2h7l3 3v14H2z" fill="#fff" stroke="#3050b8" stroke-width="1"/><path d="M7 8h9l3 3v12H7z" fill="#f4f6ff" stroke="#3050b8" stroke-width="1"/><rect x="9" y="15" width="8" height="7.500" fill="#fff" stroke="#223" stroke-width="1"/><path d="M10.500 17.500l2.500 3.500L20 9.500" fill="none" stroke="#1838c0" stroke-width="2"/></svg>
<svg class="ico" style="left:48.5px;top:230px" width="23" height="23" viewBox="0 0 24 24"><rect x="2" y="4" width="15" height="17.500" rx="1" fill="#c8c8c8" stroke="#b0b0b0" stroke-width=".8"/><path d="M6 4l3.500-3 3.500 3v1.500H6z" fill="#e0e0e0" stroke="#b0b0b0" stroke-width=".6"/><path d="M10 11h7l3 3v9H10z" fill="#f0f0f0" stroke="#b4b4b4" stroke-width=".8"/><path d="M12 15h5M12 17.500h4" stroke="#c0c0c0"/><path d="M15 20l1.800 2 3.700-5" fill="none" stroke="#9a9a9a" stroke-width="1.500"/></svg>
<svg class="ico" style="left:80.5px;top:230px" width="23" height="23" viewBox="0 0 24 24"><rect x="2" y="4" width="15" height="17.500" rx="1" fill="#c8c8c8" stroke="#b0b0b0" stroke-width=".8"/><path d="M6 4l3.500-3 3.500 3v1.500H6z" fill="#e0e0e0" stroke="#b0b0b0" stroke-width=".6"/><path d="M10 11h7l3 3v9H10z" fill="#f0f0f0" stroke="#b4b4b4" stroke-width=".8"/><path d="M12 15h5M12 17.500h4" stroke="#c0c0c0"/><path d="M15 20l1.800 2 3.700-5" fill="none" stroke="#9a9a9a" stroke-width="1.500"/><path d="M8 9h7l1 1" fill="none" stroke="#b4b4b4" stroke-width=".8"/></svg>
<div class="lbl" style="left:10px;top:268.5px;">File name</div>
<div class="inp" style="left:66px;top:264px;width:229px;height:22px"><span style="right:3.500px">/usr/local/freesurfer/7.1.0-1/subjects/bert/mri/brain.mgz</span></div>
<div class="lbl" style="left:10px;top:296.5px;">Mask</div>
<div class="cmb" style="left:66px;top:292px;width:229px;height:22px"><span>None</span><i></i></div>
<div class="lbl" style="left:10px;top:324.5px;">Opacity</div>
<div class="grv" style="left:67px;top:329.0px;width:175px"></div>
<div class="grvb" style="left:67px;top:329.0px;width:173px"></div>
<div class="hdl" style="left:235.5px;top:326.0px"></div>
<div class="inp" style="left:246px;top:321px;width:49px;height:19px"><span style="left:4px;top:3px">1.00</span><div class="abs" style="left:37px;top:0;width:1px;height:17px;background:#cfcfcf"></div><div class="abs" style="left:38px;top:0;width:9px;height:17px;background:#f4f4f4"></div><div class="abs" style="left:40px;top:3.500px;width:0;height:0;border-left:3px solid transparent;border-right:3px solid transparent;border-bottom:3.500px solid #9a9a9a"></div><div class="abs" style="left:40px;top:10.500px;width:0;height:0;border-left:3px solid transparent;border-right:3px solid transparent;border-top:3.500px solid #3a3a3a"></div></div>
<div class="chk" style="left:66px;top:351px"></div>
<div class="lbl" style="left:79px;top:349.8px;">Smooth display</div>
<div class="lbl" style="left:10px;top:375.5px;">Color map</div>
<div class="cmb" style="left:66px;top:371px;width:229px;height:22px"><span>Grayscale</span><i></i></div>
<div class="lbl" style="left:10px;top:403.5px;">Window</div>
<div class="grv" style="left:67px;top:408.0px;width:146px"></div>
<div class="grvb" style="left:67px;top:408.0px;width:49.2px"></div>
<div class="hdl" style="left:111.7px;top:405.0px"></div>
<div class="inp" style="left:220px;top:399px;width:75px;height:22px"><span style="left:2.5px;">125.98</span></div>
<div class="lbl" style="left:10px;top:431.5px;">Level</div>
<div class="grv" style="left:67px;top:436.0px;width:151px"></div>
<div class="grvb" style="left:67px;top:436.0px;width:55.3px"></div>
<div class="hdl" style="left:117.8px;top:433.0px"></div>
<div class="inp" style="left:220px;top:427px;width:75px;height:22px"><span style="left:2.5px;">70.03</span></div>
<div class="lbl" style="left:10px;top:459.5px;">Min</div>
<div class="grv" style="left:67px;top:464.0px;width:151px"></div>
<div class="grvb" style="left:67px;top:464.0px;width:31.1px"></div>
<div class="hdl" style="left:93.6px;top:461.0px"></div>
<div class="inp" style="left:220px;top:455px;width:75px;height:22px"><span style="left:2.5px;">7.04</span></div>
<div class="lbl" style="left:10px;top:487.5px;">Max</div>
<div class="grv" style="left:67px;top:492.0px;width:151px"></div>
<div class="grvb" style="left:67px;top:492.0px;width:94.3px"></div>
<div class="hdl" style="left:156.8px;top:489.0px"></div>
<div class="inp" style="left:220px;top:483px;width:75px;height:22px"><span style="left:2.5px;">133.02</span></div>
<div class="chk" style="left:66px;top:515px"></div>
<div class="lbl" style="left:79px;top:513.5px;">Use percentile</div>
<div class="chk" style="left:66px;top:533px"></div>
<div class="lbl" style="left:79px;top:531.5px;">Clear background</div>
<div class="cmb" style="left:66px;top:547px;width:80px;height:18px;text-align:center"><span style="left:0;right:0;top:1.500px">Reset</span></div>
<div class="lbl" style="left:10px;top:575.5px;">Label value</div>
<div class="inp" style="left:66px;top:571px;width:60px;height:22px"><span style="left:3px;">1</span></div>
<div class="lbl" style="left:10px;top:601.5px;">Threshold</div>
<div class="grv" style="left:65px;top:606.0px;width:165px"></div>
<div class="hdl" style="left:60.0px;top:603.0px"></div>
<div class="inp" style="left:235px;top:597px;width:60px;height:22px"><span style="left:3px;"></span></div>
<div class="lbl" style="left:10px;top:627.5px;">Show intensity projection map</div>
<div class="cmb" style="left:155px;top:623px;width:140px;height:22px"><span>None</span><i></i></div>
<div class="chk" style="left:10px;top:653px"></div>
<div class="lbl" style="left:23.3px;top:651.5px;">Show label outline only (Ctrl+L)</div>
<div class="chk" style="left:10px;top:675px"></div>
<div class="lbl" style="left:23.3px;top:673.5px;">Show as isosurface in 3D view</div>
<div class="chk" style="left:10px;top:697px"></div>
<svg class="abs" style="left:10px;top:697px" width="10" height="10" viewBox="0 0 10 10"><path d="M2.500 4.500L4.300 7.500 7.500 2.500" fill="none" stroke="#111" stroke-width="1.500"/></svg>
<div class="lbl" style="left:23.3px;top:695.5px;">Show in Info panel</div>
<!-- ---- render views ---- -->
<div id="views">
<svg class="abs" style="left:0;top:0" width="600" height="546" viewBox="1416 92 600 546">
<filter id="bl" x="-5%" y="-5%" width="110%" height="110%" color-interpolation-filters="sRGB"><feGaussianBlur stdDeviation="0.550" result="b"/><feTurbulence type="fractalNoise" baseFrequency="0.140" numOctaves="2" seed="7" result="n"/><feColorMatrix in="n" type="matrix" values="1.600 0 0 0 -0.300  1.600 0 0 0 -0.300  1.600 0 0 0 -0.300  0 0 0 0 1" result="g"/><feComposite in="b" in2="g" operator="arithmetic" k1="0.240" k2="0.880" k3="0" k4="0"/></filter>
<filter id="bl2" x="-5%" y="-5%" width="110%" height="110%" color-interpolation-filters="sRGB"><feGaussianBlur stdDeviation="0.700" result="b"/><feTurbulence type="fractalNoise" baseFrequency="0.140" numOctaves="2" seed="11" result="n"/><feColorMatrix in="n" type="matrix" values="1.600 0 0 0 -0.300  1.600 0 0 0 -0.300  1.600 0 0 0 -0.300  0 0 0 0 1" result="g"/><feComposite in="b" in2="g" operator="arithmetic" k1="0.240" k2="0.880" k3="0" k4="0"/></filter>
<g filter="url(#bl)"><path d="M1525.5 149.4C1537.3 149.1 1533.8 148.7 1550.6 150.5C1567.3 152.2 1558.9 151.2 1575.7 154.6C1592.4 158.1 1584.7 155.3 1600.7 160.9C1616.8 166.5 1611.2 163.4 1623.7 171.4C1636.3 179.4 1631.1 175.2 1638.4 185.0C1645.7 194.7 1642.6 190.5 1645.7 200.6C1648.8 210.8 1648.1 205.5 1647.8 215.3C1647.4 225.0 1647.4 221.6 1644.7 229.9C1641.9 238.3 1643.6 234.8 1639.4 240.4C1635.3 246.0 1640.8 243.5 1632.1 246.6C1623.4 249.8 1625.1 249.4 1613.3 249.8C1601.4 250.1 1604.2 250.1 1596.6 247.7C1588.9 245.3 1594.3 243.2 1590.3 242.5C1586.2 241.8 1587.2 242.8 1584.4 245.6C1581.6 248.4 1585.4 247.3 1581.9 250.8C1578.4 254.4 1578.5 255.2 1574.0 256.3C1569.4 257.3 1571.3 252.3 1568.3 254.0C1565.4 255.6 1568.3 254.7 1565.2 261.3C1562.1 267.9 1564.5 265.5 1558.9 273.8C1553.3 282.2 1556.1 278.0 1548.5 286.4C1540.8 294.7 1543.6 292.7 1535.9 298.9C1528.3 305.2 1531.6 304.2 1525.5 305.2C1519.3 306.2 1523.1 306.9 1517.5 302.1C1511.9 297.2 1515.8 298.2 1508.7 290.6C1501.6 282.9 1503.9 286.0 1496.2 279.1C1488.5 272.1 1493.4 276.3 1485.7 269.7C1478.1 263.0 1480.2 266.9 1473.2 259.2C1466.2 251.5 1469.4 255.7 1464.8 246.6C1460.3 237.6 1461.7 242.5 1459.6 232.0C1457.5 221.6 1457.5 226.4 1458.5 215.3C1459.6 204.1 1458.5 209.0 1462.7 198.6C1466.9 188.1 1464.1 193.0 1471.1 183.9C1478.1 174.9 1473.9 179.7 1483.6 171.4C1493.4 163.0 1489.9 165.4 1500.4 158.8C1510.8 152.2 1506.6 154.6 1515.0 151.5C1523.4 148.4 1513.6 149.8 1525.5 149.4Z" fill="#505050" />
<path d="M1508.7 160.9C1520.7 155.9 1514.3 156.6 1529.6 154.6C1545.0 152.7 1538.0 153.5 1554.7 155.1C1571.5 156.6 1563.1 154.9 1579.8 159.2C1596.6 163.6 1589.9 160.5 1604.9 168.0C1620.0 175.5 1614.2 171.6 1625.0 181.8C1635.8 192.0 1632.2 186.7 1637.3 198.6C1642.5 210.4 1641.2 206.8 1640.5 217.4C1639.8 228.0 1641.5 224.1 1635.3 230.3C1629.0 236.6 1630.4 234.9 1621.7 236.2C1612.9 237.4 1618.9 234.1 1609.1 234.1C1599.4 234.1 1602.1 236.9 1592.4 236.2C1582.6 235.5 1589.6 234.1 1579.8 232.0C1570.1 229.9 1577.0 230.6 1563.1 229.9C1549.2 229.2 1552.0 231.3 1538.0 229.9C1524.1 228.5 1531.0 227.8 1521.3 225.7C1511.5 223.6 1516.4 222.9 1508.7 223.6C1501.1 224.3 1506.6 225.7 1498.3 227.8C1489.9 229.9 1493.1 231.0 1483.6 229.9C1474.2 228.9 1475.6 231.0 1470.0 224.7C1464.5 218.4 1466.4 220.9 1466.9 211.1C1467.4 201.3 1467.0 205.3 1471.5 195.4C1476.0 185.5 1473.1 190.0 1480.5 181.4C1487.9 172.8 1484.3 176.5 1493.7 169.7C1503.1 162.9 1496.7 165.9 1508.7 160.9Z" fill="#a4a4a4" />
<path d="M1592.4 238.3C1596.9 234.5 1598.7 237.2 1611.2 235.1C1623.7 233.1 1620.6 231.0 1630.0 232.0C1639.4 233.1 1638.7 233.5 1639.4 238.3C1640.1 243.0 1640.8 242.7 1632.1 246.2C1623.4 249.7 1624.8 248.6 1613.3 248.7C1601.8 248.9 1604.6 250.1 1597.6 246.6C1590.6 243.2 1587.9 242.1 1592.4 238.3Z" fill="#747474" />
<path d="M1465.9 229.9C1471.1 224.7 1474.2 228.2 1483.6 231.0C1493.1 233.8 1492.7 231.0 1494.1 238.3C1495.5 245.6 1493.4 246.6 1487.8 252.9C1482.2 259.2 1484.0 259.2 1477.4 257.1C1470.7 255.0 1471.8 255.7 1468.0 246.6C1464.1 237.6 1460.6 235.1 1465.9 229.9Z" fill="#6a6a6a" />
<path d="M1515.0 202.7C1518.8 194.5 1517.4 199.1 1526.5 194.8C1535.6 190.5 1530.0 192.3 1542.2 189.8C1554.4 187.3 1549.2 187.4 1563.1 187.3C1577.0 187.1 1571.3 187.1 1584.0 189.4C1596.7 191.6 1592.0 189.4 1601.2 194.0C1610.4 198.6 1606.7 195.5 1611.6 203.2C1616.5 210.8 1615.6 208.4 1615.8 217.0C1616.0 225.5 1617.3 223.9 1612.2 228.9C1607.2 233.9 1611.6 231.7 1600.7 232.0C1589.9 232.4 1596.6 231.3 1579.8 229.9C1563.1 228.5 1568.7 229.2 1550.6 227.8C1532.4 226.4 1537.3 228.5 1525.5 225.7C1513.6 222.9 1518.5 227.1 1515.0 219.5C1511.5 211.8 1511.2 211.0 1515.0 202.7Z" fill="#8a8a8a" />
<path d="M1535.9 221.6C1535.2 218.1 1535.2 216.9 1544.3 212.1C1553.3 207.4 1550.6 208.4 1563.1 207.3C1575.7 206.3 1571.1 206.4 1581.9 209.0C1592.7 211.7 1590.6 210.8 1595.5 215.3C1600.4 219.8 1600.4 219.1 1596.6 222.6C1592.7 226.1 1591.7 226.8 1584.0 225.7C1576.3 224.7 1581.9 222.3 1573.6 219.5C1565.2 216.7 1568.0 216.3 1558.9 217.4C1549.9 218.4 1554.0 221.2 1546.4 222.6C1538.7 224.0 1536.6 225.0 1535.9 221.6Z" fill="#404040" />
<path d="M1535.9 223.6C1539.4 218.6 1538.7 220.2 1546.4 217.8C1554.0 215.4 1551.3 215.4 1558.9 216.3C1566.6 217.2 1565.2 216.0 1569.4 220.5C1573.6 225.0 1573.6 224.7 1571.5 229.9C1569.4 235.1 1571.5 233.8 1563.1 236.2C1554.7 238.6 1555.4 238.3 1546.4 237.2C1537.3 236.2 1539.4 237.6 1535.9 233.1C1532.4 228.5 1532.4 228.7 1535.9 223.6Z" fill="#9c9c9c" />
<path d="M1526.5 220.5C1527.6 217.7 1525.1 217.0 1529.6 212.1C1534.2 207.3 1531.0 209.3 1540.1 205.9C1549.2 202.5 1545.0 203.5 1556.8 201.9C1568.7 200.3 1563.8 200.1 1575.7 201.1C1587.5 202.0 1583.5 201.1 1592.4 204.8C1601.3 208.5 1599.5 206.7 1602.4 212.1C1605.3 217.6 1604.5 217.9 1601.2 221.1C1597.8 224.4 1595.3 221.7 1592.4 222.0" fill="none" stroke="#e6e6e6" stroke-width="6.6" stroke-linecap="round" stroke-linejoin="round" />
<ellipse cx="1526.5" cy="219.5" rx="6.3" ry="5.4" fill="#e6e6e6" />
<path d="M1544.3 215.3C1549.2 213.5 1549.9 211.1 1558.9 210.1C1568.0 209.0 1565.5 207.6 1571.5 212.1C1577.4 216.7 1575.3 217.7 1576.7 223.6C1578.1 229.6 1576.0 227.8 1575.7 229.9" fill="none" stroke="#cfcfcf" stroke-width="1.6" stroke-linecap="round" stroke-linejoin="round" />
<path d="M1529.6 235.1C1534.5 234.5 1533.1 237.6 1544.3 238.3C1555.4 239.0 1551.3 239.3 1563.1 237.2C1575.0 235.1 1570.8 231.7 1579.8 232.0C1588.9 232.4 1588.9 234.1 1590.3 238.3C1591.7 242.5 1590.3 241.1 1584.0 244.6C1577.7 248.0 1577.7 248.7 1571.5 248.7C1565.2 248.7 1570.8 248.0 1565.2 244.6C1559.6 241.1 1563.8 239.0 1554.7 238.3C1545.7 237.6 1546.4 241.8 1538.0 242.5C1529.6 243.2 1532.4 242.8 1529.6 240.4C1526.9 237.9 1524.8 235.8 1529.6 235.1Z" fill="#2c2c2c" />
<path d="M1537.2 241.2C1541.6 236.1 1540.7 236.9 1546.4 234.9C1552.1 232.9 1553.4 232.3 1558.5 233.7C1563.6 235.0 1564.4 234.8 1565.6 240.0C1566.8 245.1 1566.0 245.6 1563.1 252.9C1560.2 260.3 1559.8 259.8 1554.7 267.6C1549.7 275.4 1549.6 274.8 1544.3 282.2C1538.9 289.6 1539.4 289.3 1534.7 295.2C1530.0 301.1 1530.7 302.8 1526.7 304.4C1522.7 305.9 1521.1 305.8 1519.6 301.0C1518.2 296.2 1519.7 294.7 1521.3 286.4C1522.8 278.0 1523.2 278.3 1525.5 269.7C1527.7 261.0 1526.5 261.6 1529.6 254.0C1532.8 246.4 1532.7 246.3 1537.2 241.2Z" fill="#d2d2d2" />
<path d="M1550.6 240.4C1548.5 246.0 1549.5 243.9 1544.3 257.1C1539.1 270.3 1541.1 265.8 1534.9 280.1C1528.6 294.4 1528.6 293.4 1525.5 300.0" fill="none" stroke="#dedede" stroke-width="2.2" stroke-linecap="round" stroke-linejoin="round" />
<path d="M1563.1 244.6C1561.7 251.5 1563.1 252.9 1558.9 265.5C1554.7 278.0 1553.3 276.6 1550.6 282.2" fill="none" stroke="#8a8a8a" stroke-width="1.2" stroke-linecap="round" stroke-linejoin="round" />
<path d="M1477.4 262.3C1477.4 263.7 1480.9 264.4 1487.8 269.7C1494.8 274.9 1491.3 272.1 1498.3 278.0C1505.2 283.9 1502.5 280.5 1508.7 287.4C1515.0 294.4 1513.5 299.3 1517.1 298.9C1520.7 298.6 1520.3 294.0 1519.6 286.4C1518.9 278.7 1521.4 280.1 1515.0 275.9C1508.6 271.7 1509.4 277.3 1500.4 273.8C1491.3 270.3 1495.5 269.3 1487.8 265.5C1480.2 261.6 1477.4 260.9 1477.4 262.3Z" fill="#383838" />
<ellipse cx="1508.3" cy="251.9" rx="22.2" ry="23.0" fill="#4a4a4a" />
<ellipse cx="1508.3" cy="251.9" rx="21.3" ry="22.2" fill="#9c9c9c" />
<path d="M1518.1 257.5C1513.2 254.9 1512.5 255.9 1503.4 249.5C1494.3 243.1 1495.1 242.0 1491.0 238.3" fill="none" stroke="#cfcfcf" stroke-width="1.1" stroke-linecap="round" stroke-linejoin="round" />
<path d="M1518.1 257.5C1514.7 253.6 1513.7 254.3 1507.9 245.8C1502.2 237.3 1503.2 236.6 1500.8 232.0" fill="none" stroke="#cfcfcf" stroke-width="1.1" stroke-linecap="round" stroke-linejoin="round" />
<path d="M1518.1 257.5C1516.6 253.0 1515.5 253.2 1513.6 243.9C1511.8 234.5 1512.9 234.3 1512.5 229.5" fill="none" stroke="#cfcfcf" stroke-width="1.1" stroke-linecap="round" stroke-linejoin="round" />
<path d="M1518.1 257.5C1518.7 253.9 1517.8 253.7 1519.7 246.7C1521.6 239.8 1522.4 240.0 1523.8 236.6" fill="none" stroke="#cfcfcf" stroke-width="1.1" stroke-linecap="round" stroke-linejoin="round" />
<path d="M1518.1 257.5C1513.0 257.4 1512.8 258.6 1502.7 257.0C1492.6 255.5 1492.8 254.3 1487.8 252.9" fill="none" stroke="#cfcfcf" stroke-width="1.1" stroke-linecap="round" stroke-linejoin="round" />
<path d="M1518.1 257.5C1514.1 259.8 1514.5 260.8 1505.9 264.3C1497.3 267.8 1496.9 266.8 1492.4 268.0" fill="none" stroke="#cfcfcf" stroke-width="1.1" stroke-linecap="round" stroke-linejoin="round" />
<path d="M1518.1 257.5C1516.1 260.8 1516.8 261.4 1511.9 267.4C1507.0 273.4 1506.3 272.8 1503.5 275.5" fill="none" stroke="#cfcfcf" stroke-width="1.1" stroke-linecap="round" stroke-linejoin="round" />
<path d="M1518.1 257.5C1518.1 260.3 1518.8 260.4 1518.1 265.8C1517.4 271.2 1516.7 271.2 1516.1 273.8" fill="none" stroke="#cfcfcf" stroke-width="1.1" stroke-linecap="round" stroke-linejoin="round" />
<path d="M1518.1 257.5C1519.4 256.6 1519.3 256.3 1522.1 254.7C1524.8 253.2 1525.0 253.5 1526.5 252.9" fill="none" stroke="#cfcfcf" stroke-width="1.1" stroke-linecap="round" stroke-linejoin="round" />
<path d="M1518.1 257.5C1510.7 249.9 1503.2 242.2 1495.8 234.5" fill="none" stroke="#6a6a6a" stroke-width="0.6" stroke-linecap="round" stroke-linejoin="round" />
<path d="M1518.1 257.5C1514.3 248.5 1510.5 239.4 1506.6 230.3" fill="none" stroke="#6a6a6a" stroke-width="0.6" stroke-linecap="round" stroke-linejoin="round" />
<path d="M1518.1 257.5C1518.2 249.0 1518.3 240.5 1518.4 232.0" fill="none" stroke="#6a6a6a" stroke-width="0.6" stroke-linecap="round" stroke-linejoin="round" />
<path d="M1518.1 257.5C1508.4 253.6 1498.6 249.6 1488.9 245.6" fill="none" stroke="#6a6a6a" stroke-width="0.6" stroke-linecap="round" stroke-linejoin="round" />
<path d="M1518.1 257.5C1508.6 258.6 1499.0 259.8 1489.5 260.9" fill="none" stroke="#6a6a6a" stroke-width="0.6" stroke-linecap="round" stroke-linejoin="round" />
<path d="M1518.1 257.5C1511.4 262.4 1504.6 267.3 1497.9 272.2" fill="none" stroke="#6a6a6a" stroke-width="0.6" stroke-linecap="round" stroke-linejoin="round" />
<path d="M1518.1 257.5C1515.4 263.7 1512.6 269.8 1509.8 275.9" fill="none" stroke="#6a6a6a" stroke-width="0.6" stroke-linecap="round" stroke-linejoin="round" />
<ellipse cx="1572.7" cy="252.9" rx="2.9" ry="3.1" fill="#f6f6f6" />
<ellipse cx="1579.8" cy="252.9" rx="2.9" ry="2.1" fill="#8a8a8a" />
<path d="M1515.0 162.6C1513.8 165.5 1509.9 166.2 1511.2 171.4C1512.6 176.5 1511.7 176.7 1519.2 178.1C1526.7 179.5 1528.9 176.4 1533.8 175.5" fill="none" stroke="#333" stroke-width="1.5" stroke-linecap="round" stroke-linejoin="round" />
<path d="M1530.1 159.2C1530.8 162.6 1533.1 163.0 1532.2 169.3C1531.2 175.5 1528.8 175.1 1527.1 178.1" fill="none" stroke="#333" stroke-width="1.5" stroke-linecap="round" stroke-linejoin="round" />
<path d="M1544.3 158.4C1543.0 162.0 1538.4 163.4 1540.5 169.3C1542.6 175.1 1544.3 176.0 1550.6 176.0C1556.8 176.0 1556.4 171.5 1559.3 169.3" fill="none" stroke="#333" stroke-width="1.5" stroke-linecap="round" stroke-linejoin="round" />
<path d="M1563.1 160.9C1565.3 164.4 1569.1 165.0 1569.8 171.4C1570.5 177.8 1566.7 177.2 1565.2 180.2" fill="none" stroke="#333" stroke-width="1.5" stroke-linecap="round" stroke-linejoin="round" />
<path d="M1580.3 163.0C1581.0 166.5 1578.3 167.7 1582.3 173.5C1586.4 179.2 1589.0 177.9 1592.4 180.2" fill="none" stroke="#333" stroke-width="1.5" stroke-linecap="round" stroke-linejoin="round" />
<path d="M1597.0 169.3C1598.4 172.8 1601.2 173.3 1601.2 179.7C1601.2 186.1 1598.4 185.6 1597.0 188.5" fill="none" stroke="#333" stroke-width="1.5" stroke-linecap="round" stroke-linejoin="round" />
<path d="M1611.6 177.6C1612.3 181.1 1610.2 183.1 1613.7 188.1C1617.2 193.1 1619.3 191.2 1622.1 192.7" fill="none" stroke="#333" stroke-width="1.5" stroke-linecap="round" stroke-linejoin="round" />
<path d="M1626.3 190.2C1625.6 194.4 1622.8 195.6 1624.2 202.7C1625.6 209.8 1628.4 208.6 1630.4 211.5" fill="none" stroke="#333" stroke-width="1.5" stroke-linecap="round" stroke-linejoin="round" />
<path d="M1495.4 175.1C1498.6 180.8 1498.4 183.1 1505.0 192.3C1511.5 201.5 1511.5 193.5 1515.0 202.7C1518.5 211.9 1515.3 214.2 1515.4 219.9" fill="none" stroke="#333" stroke-width="1.5" stroke-linecap="round" stroke-linejoin="round" />
<path d="M1471.5 209.4C1476.9 211.5 1476.0 212.2 1487.8 215.7C1499.7 219.2 1500.6 218.5 1507.1 219.9" fill="none" stroke="#333" stroke-width="1.5" stroke-linecap="round" stroke-linejoin="round" />
<path d="M1479.5 190.2C1483.8 193.7 1489.5 192.8 1492.4 200.6C1495.4 208.5 1489.6 209.3 1488.2 213.6" fill="none" stroke="#333" stroke-width="1.5" stroke-linecap="round" stroke-linejoin="round" />
<path d="M1630.0 219.5C1627.9 222.3 1629.3 223.6 1623.7 227.8C1618.2 232.0 1616.8 230.6 1613.3 232.0" fill="none" stroke="#333" stroke-width="1.5" stroke-linecap="round" stroke-linejoin="round" />
<path d="M1508.7 181.8C1511.5 184.6 1508.7 189.1 1517.1 190.2C1525.5 191.2 1528.3 186.7 1533.8 185.0" fill="none" stroke="#333" stroke-width="1.5" stroke-linecap="round" stroke-linejoin="round" />
<path d="M1554.7 181.8C1560.3 182.2 1563.1 180.1 1571.5 182.9C1579.8 185.7 1577.0 187.7 1579.8 190.2" fill="none" stroke="#333" stroke-width="1.5" stroke-linecap="round" stroke-linejoin="round" />
<path d="M1483.6 181.8C1486.1 184.3 1488.5 186.7 1491.0 189.1" fill="none" stroke="#333" stroke-width="1.5" stroke-linecap="round" stroke-linejoin="round" />
<path d="M1500.4 171.4C1499.7 174.9 1496.2 176.2 1498.3 181.8C1500.4 187.4 1503.9 186.0 1506.6 188.1" fill="none" stroke="#333" stroke-width="1.5" stroke-linecap="round" stroke-linejoin="round" />
<path d="M1538.0 165.1C1540.1 167.2 1542.2 169.3 1544.3 171.4" fill="none" stroke="#333" stroke-width="1.5" stroke-linecap="round" stroke-linejoin="round" />
<path d="M1573.6 167.2C1572.9 170.0 1569.4 170.7 1571.5 175.5C1573.6 180.4 1577.0 179.7 1579.8 181.8" fill="none" stroke="#333" stroke-width="1.5" stroke-linecap="round" stroke-linejoin="round" />
<path d="M1604.9 179.7C1607.0 183.9 1609.1 188.1 1611.2 192.3" fill="none" stroke="#333" stroke-width="1.5" stroke-linecap="round" stroke-linejoin="round" />
<path d="M1617.5 198.6C1621.0 199.2 1624.4 199.9 1627.9 200.6" fill="none" stroke="#333" stroke-width="1.5" stroke-linecap="round" stroke-linejoin="round" />
<path d="M1621.7 215.3C1625.1 216.7 1628.6 218.1 1632.1 219.5" fill="none" stroke="#333" stroke-width="1.5" stroke-linecap="round" stroke-linejoin="round" />
<path d="M1477.4 202.7C1480.2 204.8 1482.9 206.9 1485.7 209.0" fill="none" stroke="#333" stroke-width="1.5" stroke-linecap="round" stroke-linejoin="round" />
<path d="M1496.2 204.8C1498.3 207.6 1501.8 207.6 1502.5 213.2C1503.2 218.8 1499.7 218.8 1498.3 221.6" fill="none" stroke="#333" stroke-width="1.5" stroke-linecap="round" stroke-linejoin="round" />
<path d="M1525.5 181.8C1526.9 184.6 1528.3 187.4 1529.6 190.2" fill="none" stroke="#333" stroke-width="1.5" stroke-linecap="round" stroke-linejoin="round" />
<path d="M1590.3 188.1C1592.4 191.6 1591.7 193.7 1596.6 198.6C1601.4 203.4 1602.1 201.3 1604.9 202.7" fill="none" stroke="#333" stroke-width="1.5" stroke-linecap="round" stroke-linejoin="round" />
<path d="M1473.2 219.5C1476.7 220.9 1480.2 222.3 1483.6 223.6" fill="none" stroke="#333" stroke-width="1.5" stroke-linecap="round" stroke-linejoin="round" />
<path d="M1515.4 192.7C1521.6 190.2 1519.3 188.8 1533.8 185.2C1548.3 181.5 1542.2 181.8 1558.9 181.8C1575.7 181.8 1569.2 181.3 1584.0 185.2C1598.8 189.1 1593.4 186.1 1603.3 193.5C1613.2 200.9 1609.5 197.2 1613.7 207.3C1617.9 217.5 1615.1 218.5 1615.8 224.1" fill="none" stroke="#4a4a4a" stroke-width="1.4" stroke-linecap="round" stroke-linejoin="round" />
<path d="M1471.1 185.0C1476.7 180.4 1475.3 179.7 1487.8 171.4C1500.4 163.0 1493.4 166.0 1508.7 159.9C1524.1 153.7 1515.7 154.7 1533.8 153.0C1552.0 151.2 1543.6 152.0 1563.1 154.6C1582.6 157.3 1574.3 155.3 1592.4 160.9C1610.5 166.5 1603.5 163.0 1617.5 171.4C1631.4 179.7 1625.8 175.5 1634.2 186.0C1642.6 196.5 1639.1 191.6 1642.6 202.7C1646.1 213.9 1644.0 213.9 1644.7 219.5" fill="none" stroke="#707070" stroke-width="1.0" stroke-linecap="round" stroke-linejoin="round" /></g>
<g filter="url(#bl)"><path d="M1865.7 154.3C1859.8 154.8 1862.7 153.8 1854.1 155.8C1845.4 157.7 1848.7 156.1 1839.8 160.2C1830.8 164.4 1834.7 161.9 1827.2 168.3C1819.7 174.7 1823.0 170.9 1817.4 179.4C1811.7 187.9 1813.5 184.8 1810.2 193.8C1806.9 202.7 1808.1 198.5 1807.5 206.3C1806.9 214.1 1809.6 211.1 1808.4 217.0C1807.2 223.0 1806.0 217.6 1803.9 224.2C1801.8 230.8 1802.1 227.8 1802.1 236.8C1802.1 245.7 1801.5 242.7 1803.9 251.1C1806.3 259.5 1803.9 256.2 1809.3 261.8C1814.7 267.5 1812.3 265.6 1820.0 268.1C1827.8 270.6 1824.2 269.5 1832.6 269.4C1840.9 269.2 1838.3 269.4 1845.1 267.6C1852.0 265.8 1850.1 267.6 1853.2 264.0C1856.3 260.4 1851.8 260.4 1854.4 256.8C1857.1 253.2 1855.4 254.4 1861.3 253.2C1867.1 252.0 1866.0 252.0 1872.0 253.2C1878.0 254.4 1876.5 253.2 1879.2 256.8C1881.9 260.4 1876.5 260.2 1880.1 264.0C1883.7 267.8 1882.5 266.5 1889.9 268.3C1897.4 270.1 1894.1 270.0 1902.5 269.4C1910.8 268.8 1907.5 269.6 1915.0 266.5C1922.5 263.4 1919.8 266.4 1924.9 260.1C1929.9 253.7 1928.1 255.9 1930.2 247.5C1932.3 239.1 1932.0 242.7 1931.1 235.0C1930.2 227.2 1928.4 232.0 1927.6 224.2C1926.7 216.4 1929.2 220.6 1928.6 211.7C1928.0 202.7 1928.8 206.9 1925.8 197.3C1922.7 187.8 1924.9 192.0 1919.5 183.0C1914.1 174.0 1917.1 177.6 1909.6 170.5C1902.2 163.3 1906.1 166.3 1897.1 161.5C1888.1 156.7 1891.1 158.5 1882.8 156.1C1874.4 153.7 1877.7 154.9 1872.0 154.3C1866.3 153.7 1871.7 153.9 1865.7 154.3Z" fill="#8c8c8c" />
<path d="M1865.7 161.5C1857.4 161.5 1862.2 159.4 1854.1 160.6C1846.0 161.8 1849.3 160.6 1841.5 165.1C1833.8 169.6 1837.4 166.9 1830.8 174.0C1824.2 181.2 1826.6 177.6 1821.8 186.6C1817.1 195.5 1818.6 191.4 1816.5 200.9C1814.4 210.5 1816.8 205.7 1815.6 215.3C1814.4 224.8 1813.8 219.4 1812.9 229.6C1812.0 239.7 1811.1 236.8 1812.9 245.7C1814.7 254.7 1812.3 251.1 1818.3 256.5C1824.2 261.8 1821.8 260.6 1830.8 261.8C1839.8 263.0 1838.3 263.6 1845.1 260.1C1852.0 256.5 1846.0 255.3 1851.4 251.1C1856.8 246.9 1854.4 248.7 1861.3 247.5C1868.1 246.3 1865.1 246.3 1872.0 247.5C1878.9 248.7 1876.5 246.9 1881.9 251.1C1887.2 255.3 1881.3 256.2 1888.1 260.1C1895.0 263.9 1893.5 263.3 1902.5 262.7C1911.4 262.1 1908.1 263.9 1915.0 258.3C1921.9 252.6 1920.4 255.3 1923.1 245.7C1925.8 236.2 1924.0 239.7 1923.1 229.6C1922.2 219.4 1921.3 224.8 1920.4 215.3C1919.5 205.7 1922.2 210.5 1920.4 200.9C1918.6 191.4 1919.8 195.5 1915.0 186.6C1910.2 177.6 1913.2 181.2 1906.1 174.0C1898.9 166.9 1902.5 169.6 1893.5 165.1C1884.5 160.6 1888.4 161.8 1879.2 160.6C1869.9 159.4 1874.1 161.5 1865.7 161.5Z" fill="#c4c4c4" />
<path d="M1839.8 199.1C1847.2 192.0 1845.4 194.9 1854.1 193.8C1862.7 192.6 1857.4 195.5 1865.7 195.5C1874.1 195.5 1869.9 192.6 1879.2 193.8C1888.4 194.9 1886.3 192.0 1893.5 199.1C1900.7 206.3 1900.7 203.9 1900.7 215.3C1900.7 226.6 1900.7 224.8 1893.5 233.2C1886.3 241.5 1888.4 238.5 1879.2 240.3C1869.9 242.1 1874.7 238.5 1865.7 238.5C1856.8 238.5 1861.6 242.1 1852.3 240.3C1843.0 238.5 1844.8 241.5 1838.0 233.2C1831.1 224.8 1831.1 226.6 1831.7 215.3C1832.3 203.9 1832.3 206.3 1839.8 199.1Z" fill="#cecece" />
<path d="M1827.6 168.7C1830.4 171.7 1830.9 172.3 1836.2 177.6C1841.4 183.0 1840.9 182.4 1843.3 184.8" fill="none" stroke="#7c7c7c" stroke-width="2.6" stroke-linecap="round" stroke-linejoin="round" />
<path d="M1854.1 157.0C1854.8 160.9 1856.7 161.8 1856.2 168.7C1855.8 175.5 1853.8 174.6 1852.7 177.6" fill="none" stroke="#7c7c7c" stroke-width="2.6" stroke-linecap="round" stroke-linejoin="round" />
<path d="M1882.8 157.0C1883.2 160.3 1881.8 160.6 1884.2 166.9C1886.6 173.1 1888.0 172.8 1889.9 175.8" fill="none" stroke="#7c7c7c" stroke-width="2.6" stroke-linecap="round" stroke-linejoin="round" />
<path d="M1909.6 170.8C1906.6 173.7 1905.5 174.8 1900.7 179.4C1895.9 184.1 1897.1 183.0 1895.3 184.8" fill="none" stroke="#7c7c7c" stroke-width="2.6" stroke-linecap="round" stroke-linejoin="round" />
<path d="M1810.2 193.8C1814.1 194.4 1815.0 193.2 1821.8 195.5C1828.7 197.9 1827.8 199.1 1830.8 200.9" fill="none" stroke="#7c7c7c" stroke-width="2.6" stroke-linecap="round" stroke-linejoin="round" />
<path d="M1925.8 197.3C1922.2 197.9 1920.4 197.3 1915.0 199.1C1909.6 200.9 1911.4 201.5 1909.6 202.7" fill="none" stroke="#7c7c7c" stroke-width="2.6" stroke-linecap="round" stroke-linejoin="round" />
<path d="M1808.4 217.4C1812.3 217.9 1814.3 216.6 1820.0 218.8C1825.8 221.1 1824.5 218.2 1825.8 224.2C1827.1 230.2 1824.6 232.6 1824.0 236.8" fill="none" stroke="#7c7c7c" stroke-width="2.6" stroke-linecap="round" stroke-linejoin="round" />
<path d="M1928.4 217.4C1924.6 218.5 1923.1 218.4 1916.8 220.6C1910.5 222.9 1911.4 218.8 1909.6 224.2C1907.8 229.6 1910.8 232.6 1911.4 236.8" fill="none" stroke="#7c7c7c" stroke-width="2.6" stroke-linecap="round" stroke-linejoin="round" />
<path d="M1829.0 208.1C1830.3 211.7 1832.9 210.5 1832.9 218.8C1832.9 227.2 1830.3 228.4 1829.0 233.2" fill="none" stroke="#7c7c7c" stroke-width="2.6" stroke-linecap="round" stroke-linejoin="round" />
<path d="M1902.5 208.1C1903.5 211.7 1903.3 210.5 1905.7 218.8C1908.1 227.2 1908.3 228.4 1909.6 233.2" fill="none" stroke="#7c7c7c" stroke-width="2.6" stroke-linecap="round" stroke-linejoin="round" />
<path d="M1803.9 236.8C1807.5 238.0 1808.7 236.2 1814.7 240.3C1820.6 244.5 1819.4 246.3 1821.8 249.3" fill="none" stroke="#7c7c7c" stroke-width="2.6" stroke-linecap="round" stroke-linejoin="round" />
<path d="M1930.8 236.8C1926.7 238.5 1925.0 238.0 1918.6 242.1C1912.1 246.3 1913.8 246.9 1911.4 249.3" fill="none" stroke="#7c7c7c" stroke-width="2.6" stroke-linecap="round" stroke-linejoin="round" />
<path d="M1814.7 254.7C1818.3 254.7 1819.3 257.1 1825.4 254.7C1831.5 252.3 1830.4 249.9 1832.9 247.5" fill="none" stroke="#7c7c7c" stroke-width="2.6" stroke-linecap="round" stroke-linejoin="round" />
<path d="M1918.6 256.5C1915.0 255.9 1913.8 257.7 1907.8 254.7C1901.9 251.7 1903.1 249.9 1900.7 247.5" fill="none" stroke="#7c7c7c" stroke-width="2.6" stroke-linecap="round" stroke-linejoin="round" />
<path d="M1839.8 263.6C1839.8 260.6 1839.8 257.7 1839.8 254.7" fill="none" stroke="#7c7c7c" stroke-width="2.6" stroke-linecap="round" stroke-linejoin="round" />
<path d="M1895.3 263.6C1895.3 260.6 1895.3 257.7 1895.3 254.7" fill="none" stroke="#7c7c7c" stroke-width="2.6" stroke-linecap="round" stroke-linejoin="round" />
<path d="M1827.6 168.7C1830.4 171.7 1830.9 172.3 1836.2 177.6C1841.4 183.0 1840.9 182.4 1843.3 184.8" fill="none" stroke="#3c3c3c" stroke-width="0.9" stroke-linecap="round" stroke-linejoin="round" />
<path d="M1854.1 157.0C1854.8 160.9 1856.7 161.8 1856.2 168.7C1855.8 175.5 1853.8 174.6 1852.7 177.6" fill="none" stroke="#3c3c3c" stroke-width="0.9" stroke-linecap="round" stroke-linejoin="round" />
<path d="M1882.8 157.0C1883.2 160.3 1881.8 160.6 1884.2 166.9C1886.6 173.1 1888.0 172.8 1889.9 175.8" fill="none" stroke="#3c3c3c" stroke-width="0.9" stroke-linecap="round" stroke-linejoin="round" />
<path d="M1909.6 170.8C1906.6 173.7 1905.5 174.8 1900.7 179.4C1895.9 184.1 1897.1 183.0 1895.3 184.8" fill="none" stroke="#3c3c3c" stroke-width="0.9" stroke-linecap="round" stroke-linejoin="round" />
<path d="M1810.2 193.8C1814.1 194.4 1815.0 193.2 1821.8 195.5C1828.7 197.9 1827.8 199.1 1830.8 200.9" fill="none" stroke="#3c3c3c" stroke-width="0.9" stroke-linecap="round" stroke-linejoin="round" />
<path d="M1925.8 197.3C1922.2 197.9 1920.4 197.3 1915.0 199.1C1909.6 200.9 1911.4 201.5 1909.6 202.7" fill="none" stroke="#3c3c3c" stroke-width="0.9" stroke-linecap="round" stroke-linejoin="round" />
<path d="M1808.4 217.4C1812.3 217.9 1814.3 216.6 1820.0 218.8C1825.8 221.1 1824.5 218.2 1825.8 224.2C1827.1 230.2 1824.6 232.6 1824.0 236.8" fill="none" stroke="#3c3c3c" stroke-width="0.9" stroke-linecap="round" stroke-linejoin="round" />
<path d="M1928.4 217.4C1924.6 218.5 1923.1 218.4 1916.8 220.6C1910.5 222.9 1911.4 218.8 1909.6 224.2C1907.8 229.6 1910.8 232.6 1911.4 236.8" fill="none" stroke="#3c3c3c" stroke-width="0.9" stroke-linecap="round" stroke-linejoin="round" />
<path d="M1829.0 208.1C1830.3 211.7 1832.9 210.5 1832.9 218.8C1832.9 227.2 1830.3 228.4 1829.0 233.2" fill="none" stroke="#3c3c3c" stroke-width="0.9" stroke-linecap="round" stroke-linejoin="round" />
<path d="M1902.5 208.1C1903.5 211.7 1903.3 210.5 1905.7 218.8C1908.1 227.2 1908.3 228.4 1909.6 233.2" fill="none" stroke="#3c3c3c" stroke-width="0.9" stroke-linecap="round" stroke-linejoin="round" />
<path d="M1803.9 236.8C1807.5 238.0 1808.7 236.2 1814.7 240.3C1820.6 244.5 1819.4 246.3 1821.8 249.3" fill="none" stroke="#3c3c3c" stroke-width="0.9" stroke-linecap="round" stroke-linejoin="round" />
<path d="M1930.8 236.8C1926.7 238.5 1925.0 238.0 1918.6 242.1C1912.1 246.3 1913.8 246.9 1911.4 249.3" fill="none" stroke="#3c3c3c" stroke-width="0.9" stroke-linecap="round" stroke-linejoin="round" />
<path d="M1814.7 254.7C1818.3 254.7 1819.3 257.1 1825.4 254.7C1831.5 252.3 1830.4 249.9 1832.9 247.5" fill="none" stroke="#3c3c3c" stroke-width="0.9" stroke-linecap="round" stroke-linejoin="round" />
<path d="M1918.6 256.5C1915.0 255.9 1913.8 257.7 1907.8 254.7C1901.9 251.7 1903.1 249.9 1900.7 247.5" fill="none" stroke="#3c3c3c" stroke-width="0.9" stroke-linecap="round" stroke-linejoin="round" />
<path d="M1839.8 263.6C1839.8 260.6 1839.8 257.7 1839.8 254.7" fill="none" stroke="#3c3c3c" stroke-width="0.9" stroke-linecap="round" stroke-linejoin="round" />
<path d="M1895.3 263.6C1895.3 260.6 1895.3 257.7 1895.3 254.7" fill="none" stroke="#3c3c3c" stroke-width="0.9" stroke-linecap="round" stroke-linejoin="round" />
<path d="M1868.1 155.2C1868.3 162.1 1868.8 162.4 1868.8 175.8C1868.8 189.3 1868.3 189.0 1868.1 195.5" fill="none" stroke="#6a6a6a" stroke-width="2.4" stroke-linecap="round" stroke-linejoin="round" />
<path d="M1868.1 155.2C1868.3 162.1 1868.8 162.4 1868.8 175.8C1868.8 189.3 1868.3 189.0 1868.1 195.5" fill="none" stroke="#3a3a3a" stroke-width="0.9" stroke-linecap="round" stroke-linejoin="round" />
<path d="M1860.4 182.1C1861.4 178.5 1860.4 179.3 1865.7 178.5C1871.1 177.7 1872.5 177.2 1876.5 179.8C1880.5 182.3 1879.4 182.6 1877.7 186.2C1876.1 189.8 1876.7 189.5 1871.6 190.5C1866.6 191.5 1866.5 192.1 1862.7 189.3C1858.9 186.5 1859.3 185.7 1860.4 182.1Z" fill="#a2a2a2" />
<ellipse cx="1904.3" cy="187.5" rx="6.5" ry="5.7" fill="#8e8e8e" />
<ellipse cx="1905.7" cy="188.0" rx="2.5" ry="2.2" fill="#4a4a4a" />
<path d="M1854.4 201.3C1856.4 200.4 1857.1 200.9 1861.3 202.7C1865.4 204.5 1865.8 204.1 1867.0 206.7C1868.2 209.2 1867.5 209.5 1864.8 210.2C1862.2 211.0 1862.2 210.5 1859.1 208.8C1856.0 207.1 1857.1 207.7 1855.5 205.2C1854.0 202.7 1852.5 202.1 1854.4 201.3Z" fill="#242424" />
<path d="M1882.8 201.3C1880.8 200.4 1879.9 200.9 1875.6 202.7C1871.3 204.5 1871.1 204.1 1869.9 206.7C1868.7 209.2 1869.4 209.5 1872.0 210.2C1874.6 211.0 1874.6 210.5 1877.7 208.8C1880.8 207.1 1879.7 207.7 1881.3 205.2C1883.0 202.7 1884.7 202.1 1882.8 201.3Z" fill="#242424" />
<path d="M1863.0 210.8C1863.5 208.7 1864.5 209.0 1867.5 209.0C1870.5 209.0 1871.6 208.7 1872.0 210.8C1872.4 212.9 1870.7 213.8 1868.8 215.3C1866.9 216.7 1868.2 216.7 1866.3 215.3C1864.4 213.8 1862.6 212.9 1863.0 210.8Z" fill="#e0e0e0" />
<path d="M1867.0 215.3C1866.8 220.0 1866.4 221.2 1866.3 229.6C1866.2 238.0 1866.5 236.8 1866.6 240.3" fill="none" stroke="#5a5a5a" stroke-width="1.0" stroke-linecap="round" stroke-linejoin="round" />
<path d="M1852.7 238.9C1854.7 236.4 1856.5 241.3 1861.3 241.8C1866.0 242.3 1862.8 240.3 1867.0 240.3C1871.2 240.3 1868.8 242.3 1873.8 241.8C1878.8 241.3 1880.1 236.4 1881.9 238.9C1883.7 241.4 1884.1 245.1 1879.2 249.3C1874.2 253.5 1875.1 251.4 1867.0 251.4C1858.9 251.4 1859.8 253.5 1855.0 249.3C1850.2 245.1 1850.6 241.4 1852.7 238.9Z" fill="#454545" />
<path d="M1853.7 249.7C1858.1 245.7 1858.4 251.8 1867.0 251.8C1875.6 251.8 1875.2 245.7 1879.5 249.7C1883.8 253.6 1881.8 258.4 1879.9 263.6C1878.0 268.9 1878.1 265.4 1873.8 265.4C1869.5 265.4 1871.8 263.6 1867.0 263.6C1862.2 263.6 1863.9 265.4 1859.5 265.4C1855.0 265.4 1855.6 268.9 1853.7 263.6C1851.8 258.4 1849.3 253.6 1853.7 249.7Z" fill="#7c7c7c" />
<path d="M1836.2 240.3C1839.2 235.0 1841.5 235.6 1846.9 236.8C1852.3 238.0 1851.7 238.0 1852.3 243.9C1852.9 249.9 1853.5 251.7 1848.7 254.7C1843.9 257.7 1842.1 257.7 1838.0 252.9C1833.8 248.1 1833.2 245.7 1836.2 240.3Z" fill="#9a9a9a" />
<path d="M1897.1 240.3C1894.0 235.0 1891.4 235.6 1886.3 236.8C1881.3 238.0 1882.5 238.0 1881.9 243.9C1881.3 249.9 1879.9 251.7 1884.5 254.7C1889.1 257.7 1891.5 257.7 1895.7 252.9C1899.8 248.1 1900.2 245.7 1897.1 240.3Z" fill="#9a9a9a" />
<ellipse cx="1848.7" cy="269.4" rx="3.2" ry="3.6" fill="#f4f4f4" />
<ellipse cx="1880.4" cy="271.7" rx="3.6" ry="3.2" fill="#f4f4f4" /></g>
<g filter="url(#bl)"><path d="M1566.3 421.3C1556.2 421.7 1557.5 420.9 1548.7 422.5C1539.9 424.2 1544.5 422.1 1539.9 426.3C1535.3 430.5 1541.2 430.9 1534.9 435.1C1528.6 439.3 1527.8 435.5 1521.1 438.8C1514.4 442.2 1516.1 438.0 1514.8 445.1C1513.6 452.2 1517.3 450.1 1517.3 460.2C1517.3 470.2 1518.6 465.2 1514.8 475.2C1511.1 485.2 1510.7 478.5 1506.1 490.3C1501.5 502.0 1503.1 496.9 1501.0 510.3C1499.0 523.7 1499.4 517.0 1499.8 530.4C1500.2 543.8 1499.4 537.1 1502.3 550.4C1505.2 563.8 1503.1 558.0 1508.6 570.5C1514.0 583.0 1511.1 577.2 1518.6 588.1C1526.1 598.9 1521.9 595.6 1531.1 603.1C1540.3 610.6 1536.2 607.6 1546.2 610.6C1556.2 613.6 1554.5 612.5 1561.2 612.1C1567.9 611.8 1562.5 609.6 1566.3 609.6C1570.0 609.6 1565.0 611.8 1572.5 612.1C1580.0 612.5 1578.4 613.6 1588.8 610.6C1599.3 607.6 1594.7 610.6 1603.9 603.1C1613.1 595.6 1609.3 598.9 1616.4 588.1C1623.5 577.2 1620.6 583.0 1625.2 570.5C1629.8 558.0 1628.1 564.6 1630.2 550.4C1632.3 536.2 1631.9 542.1 1631.5 527.9C1631.0 513.7 1631.9 521.2 1628.9 507.8C1626.0 494.4 1627.3 499.4 1622.7 487.7C1618.1 476.0 1617.2 483.6 1615.2 472.7C1613.1 461.8 1617.2 466.8 1616.4 455.1C1615.6 443.4 1616.8 445.9 1612.6 437.6C1608.5 429.2 1611.0 434.2 1603.9 430.1C1596.8 425.9 1599.7 428.0 1591.3 425.0C1583.0 422.1 1587.1 422.5 1578.8 421.3C1570.4 420.0 1576.3 420.9 1566.3 421.3Z" fill="#888" />
<path d="M1566.3 430.1C1557.1 430.5 1559.1 428.0 1551.2 431.3C1543.3 434.7 1549.9 434.7 1542.4 440.1C1534.9 445.5 1534.1 440.1 1528.6 447.6C1523.2 455.1 1527.8 451.8 1526.1 462.7C1524.5 473.5 1527.4 468.5 1523.6 480.2C1519.9 491.9 1519.4 485.2 1514.8 497.8C1510.2 510.3 1511.5 503.6 1509.8 517.8C1508.2 532.0 1508.2 525.4 1509.8 540.4C1511.5 555.5 1509.4 547.9 1514.8 563.0C1520.3 578.0 1516.5 572.6 1526.1 585.5C1535.7 598.5 1532.0 595.6 1543.7 601.8C1555.4 608.1 1553.7 604.8 1561.2 604.4C1568.8 603.9 1562.5 600.6 1566.3 600.6C1570.0 600.6 1565.0 603.7 1572.5 604.4C1580.0 605.0 1578.4 608.0 1588.8 602.6C1599.3 597.2 1594.7 600.4 1603.9 588.1C1613.1 575.7 1610.6 581.4 1616.4 565.5C1622.3 549.6 1619.8 556.3 1621.4 540.4C1623.1 524.5 1623.1 532.9 1621.4 517.8C1619.8 502.8 1621.4 508.6 1616.4 495.3C1611.4 481.9 1609.7 490.3 1606.4 477.7C1603.0 465.2 1607.6 469.8 1606.4 457.6C1605.1 445.5 1607.6 449.7 1602.6 441.3C1597.6 433.0 1599.3 436.3 1591.3 432.6C1583.4 428.8 1587.1 430.9 1578.8 430.1C1570.4 429.2 1575.4 429.6 1566.3 430.1Z" fill="#bcbcbc" />
<path d="M1536.2 492.8C1542.0 484.4 1541.2 487.7 1551.2 487.7C1561.2 487.7 1556.2 492.8 1566.3 492.8C1576.3 492.8 1571.3 487.3 1581.3 487.7C1591.3 488.2 1590.5 485.7 1596.3 494.0C1602.2 502.4 1600.5 501.5 1598.9 512.8C1597.2 524.1 1602.2 522.0 1591.3 527.9C1580.5 533.7 1583.0 530.4 1566.3 530.4C1549.5 530.4 1552.0 533.7 1541.2 527.9C1530.3 522.0 1535.3 524.5 1533.6 512.8C1532.0 501.1 1530.3 501.1 1536.2 492.8Z" fill="#d2d2d2" />
<path d="M1542.4 481.5C1544.3 475.8 1545.4 474.5 1551.7 475.7C1558.0 477.0 1558.9 479.6 1561.2 485.2C1563.6 490.9 1563.7 490.3 1558.7 492.8C1553.7 495.3 1551.6 496.5 1546.2 492.8C1540.8 489.0 1540.6 487.2 1542.4 481.5Z" fill="#a6a6a6" />
<path d="M1591.3 481.5C1589.8 475.8 1588.1 474.5 1581.8 475.7C1575.5 477.0 1574.8 479.6 1572.5 485.2C1570.3 490.9 1570.4 490.3 1575.0 492.8C1579.6 495.3 1580.9 496.5 1586.3 492.8C1591.7 489.0 1592.8 487.2 1591.3 481.5Z" fill="#a6a6a6" />
<path d="M1539.9 427.6C1541.3 432.6 1543.6 432.6 1544.2 442.6C1544.8 452.6 1542.5 452.6 1541.7 457.6" fill="none" stroke="#7a7a7a" stroke-width="2.8" stroke-linecap="round" stroke-linejoin="round" />
<path d="M1556.2 423.8C1557.2 430.1 1557.6 428.8 1559.2 442.6C1560.9 456.4 1560.6 457.6 1561.2 465.2" fill="none" stroke="#7a7a7a" stroke-width="2.8" stroke-linecap="round" stroke-linejoin="round" />
<path d="M1574.3 423.8C1574.1 430.1 1574.4 428.8 1573.8 442.6C1573.2 456.4 1572.9 457.6 1572.5 465.2" fill="none" stroke="#7a7a7a" stroke-width="2.8" stroke-linecap="round" stroke-linejoin="round" />
<path d="M1591.3 426.3C1590.5 431.7 1588.0 432.2 1588.8 442.6C1589.7 453.1 1592.2 452.6 1593.8 457.6" fill="none" stroke="#7a7a7a" stroke-width="2.8" stroke-linecap="round" stroke-linejoin="round" />
<path d="M1603.9 431.3C1602.4 435.9 1597.7 435.5 1599.4 445.1C1601.0 454.7 1605.7 455.1 1608.9 460.2" fill="none" stroke="#7a7a7a" stroke-width="2.8" stroke-linecap="round" stroke-linejoin="round" />
<path d="M1518.6 447.6C1522.8 450.1 1524.0 449.7 1531.1 455.1C1538.2 460.6 1541.2 458.1 1539.9 463.9C1538.7 469.8 1531.6 469.8 1527.4 472.7" fill="none" stroke="#7a7a7a" stroke-width="2.8" stroke-linecap="round" stroke-linejoin="round" />
<path d="M1613.9 455.1C1609.7 458.1 1607.2 458.1 1601.4 463.9C1595.5 469.8 1593.8 468.1 1596.3 472.7C1598.9 477.3 1604.7 476.0 1608.9 477.7" fill="none" stroke="#7a7a7a" stroke-width="2.8" stroke-linecap="round" stroke-linejoin="round" />
<path d="M1516.1 475.7C1519.4 478.9 1523.6 477.0 1526.1 485.2C1528.6 493.4 1522.4 488.6 1523.6 500.3C1524.9 512.0 1527.8 513.7 1529.9 520.3" fill="none" stroke="#7a7a7a" stroke-width="2.8" stroke-linecap="round" stroke-linejoin="round" />
<path d="M1615.2 473.9C1612.6 477.7 1609.6 476.5 1607.6 485.2C1605.7 494.0 1611.3 488.6 1609.4 500.3C1607.5 512.0 1604.4 513.7 1601.9 520.3" fill="none" stroke="#7a7a7a" stroke-width="2.8" stroke-linecap="round" stroke-linejoin="round" />
<path d="M1506.6 490.8C1509.1 495.8 1512.6 495.9 1514.1 505.8C1515.6 515.7 1512.1 515.5 1511.1 520.3" fill="none" stroke="#7a7a7a" stroke-width="2.8" stroke-linecap="round" stroke-linejoin="round" />
<path d="M1623.4 489.0C1621.8 494.6 1618.7 495.4 1618.4 505.8C1618.2 516.2 1621.3 515.5 1622.7 520.3" fill="none" stroke="#7a7a7a" stroke-width="2.8" stroke-linecap="round" stroke-linejoin="round" />
<path d="M1501.0 530.4C1505.4 532.0 1507.4 530.4 1514.1 535.4C1520.8 540.4 1518.8 542.1 1521.1 545.4" fill="none" stroke="#7a7a7a" stroke-width="2.8" stroke-linecap="round" stroke-linejoin="round" />
<path d="M1631.0 530.4C1626.8 532.0 1624.9 530.4 1618.4 535.4C1611.9 540.4 1613.7 542.1 1611.4 545.4" fill="none" stroke="#7a7a7a" stroke-width="2.8" stroke-linecap="round" stroke-linejoin="round" />
<path d="M1503.6 552.9C1507.7 555.5 1509.4 553.8 1516.1 560.5C1522.8 567.2 1521.1 568.8 1523.6 573.0" fill="none" stroke="#7a7a7a" stroke-width="2.8" stroke-linecap="round" stroke-linejoin="round" />
<path d="M1628.9 552.9C1624.8 555.5 1623.1 553.8 1616.4 560.5C1609.7 567.2 1611.4 568.8 1608.9 573.0" fill="none" stroke="#7a7a7a" stroke-width="2.8" stroke-linecap="round" stroke-linejoin="round" />
<path d="M1518.6 586.8C1522.8 585.5 1524.0 581.0 1531.1 583.0C1538.2 585.1 1537.0 589.7 1539.9 593.1" fill="none" stroke="#7a7a7a" stroke-width="2.8" stroke-linecap="round" stroke-linejoin="round" />
<path d="M1615.2 586.8C1610.7 585.5 1609.0 581.0 1601.9 583.0C1594.8 585.1 1596.5 589.7 1593.8 593.1" fill="none" stroke="#7a7a7a" stroke-width="2.8" stroke-linecap="round" stroke-linejoin="round" />
<path d="M1546.2 609.4C1547.0 604.8 1545.4 603.5 1548.7 595.6C1552.0 587.6 1553.7 588.9 1556.2 585.5" fill="none" stroke="#7a7a7a" stroke-width="2.8" stroke-linecap="round" stroke-linejoin="round" />
<path d="M1587.6 609.4C1586.5 604.8 1587.7 603.5 1584.3 595.6C1581.0 587.6 1579.8 588.9 1577.5 585.5" fill="none" stroke="#7a7a7a" stroke-width="2.8" stroke-linecap="round" stroke-linejoin="round" />
<path d="M1551.7 570.5C1553.6 575.5 1555.6 580.5 1557.5 585.5" fill="none" stroke="#7a7a7a" stroke-width="2.8" stroke-linecap="round" stroke-linejoin="round" />
<path d="M1581.8 570.5C1580.0 575.5 1578.1 580.5 1576.3 585.5" fill="none" stroke="#7a7a7a" stroke-width="2.8" stroke-linecap="round" stroke-linejoin="round" />
<path d="M1539.9 427.6C1541.3 432.6 1543.6 432.6 1544.2 442.6C1544.8 452.6 1542.5 452.6 1541.7 457.6" fill="none" stroke="#444" stroke-width="0.9" stroke-linecap="round" stroke-linejoin="round" />
<path d="M1556.2 423.8C1557.2 430.1 1557.6 428.8 1559.2 442.6C1560.9 456.4 1560.6 457.6 1561.2 465.2" fill="none" stroke="#444" stroke-width="0.9" stroke-linecap="round" stroke-linejoin="round" />
<path d="M1574.3 423.8C1574.1 430.1 1574.4 428.8 1573.8 442.6C1573.2 456.4 1572.9 457.6 1572.5 465.2" fill="none" stroke="#444" stroke-width="0.9" stroke-linecap="round" stroke-linejoin="round" />
<path d="M1591.3 426.3C1590.5 431.7 1588.0 432.2 1588.8 442.6C1589.7 453.1 1592.2 452.6 1593.8 457.6" fill="none" stroke="#444" stroke-width="0.9" stroke-linecap="round" stroke-linejoin="round" />
<path d="M1603.9 431.3C1602.4 435.9 1597.7 435.5 1599.4 445.1C1601.0 454.7 1605.7 455.1 1608.9 460.2" fill="none" stroke="#444" stroke-width="0.9" stroke-linecap="round" stroke-linejoin="round" />
<path d="M1518.6 447.6C1522.8 450.1 1524.0 449.7 1531.1 455.1C1538.2 460.6 1541.2 458.1 1539.9 463.9C1538.7 469.8 1531.6 469.8 1527.4 472.7" fill="none" stroke="#444" stroke-width="0.9" stroke-linecap="round" stroke-linejoin="round" />
<path d="M1613.9 455.1C1609.7 458.1 1607.2 458.1 1601.4 463.9C1595.5 469.8 1593.8 468.1 1596.3 472.7C1598.9 477.3 1604.7 476.0 1608.9 477.7" fill="none" stroke="#444" stroke-width="0.9" stroke-linecap="round" stroke-linejoin="round" />
<path d="M1516.1 475.7C1519.4 478.9 1523.6 477.0 1526.1 485.2C1528.6 493.4 1522.4 488.6 1523.6 500.3C1524.9 512.0 1527.8 513.7 1529.9 520.3" fill="none" stroke="#444" stroke-width="0.9" stroke-linecap="round" stroke-linejoin="round" />
<path d="M1615.2 473.9C1612.6 477.7 1609.6 476.5 1607.6 485.2C1605.7 494.0 1611.3 488.6 1609.4 500.3C1607.5 512.0 1604.4 513.7 1601.9 520.3" fill="none" stroke="#444" stroke-width="0.9" stroke-linecap="round" stroke-linejoin="round" />
<path d="M1506.6 490.8C1509.1 495.8 1512.6 495.9 1514.1 505.8C1515.6 515.7 1512.1 515.5 1511.1 520.3" fill="none" stroke="#444" stroke-width="0.9" stroke-linecap="round" stroke-linejoin="round" />
<path d="M1623.4 489.0C1621.8 494.6 1618.7 495.4 1618.4 505.8C1618.2 516.2 1621.3 515.5 1622.7 520.3" fill="none" stroke="#444" stroke-width="0.9" stroke-linecap="round" stroke-linejoin="round" />
<path d="M1501.0 530.4C1505.4 532.0 1507.4 530.4 1514.1 535.4C1520.8 540.4 1518.8 542.1 1521.1 545.4" fill="none" stroke="#444" stroke-width="0.9" stroke-linecap="round" stroke-linejoin="round" />
<path d="M1631.0 530.4C1626.8 532.0 1624.9 530.4 1618.4 535.4C1611.9 540.4 1613.7 542.1 1611.4 545.4" fill="none" stroke="#444" stroke-width="0.9" stroke-linecap="round" stroke-linejoin="round" />
<path d="M1503.6 552.9C1507.7 555.5 1509.4 553.8 1516.1 560.5C1522.8 567.2 1521.1 568.8 1523.6 573.0" fill="none" stroke="#444" stroke-width="0.9" stroke-linecap="round" stroke-linejoin="round" />
<path d="M1628.9 552.9C1624.8 555.5 1623.1 553.8 1616.4 560.5C1609.7 567.2 1611.4 568.8 1608.9 573.0" fill="none" stroke="#444" stroke-width="0.9" stroke-linecap="round" stroke-linejoin="round" />
<path d="M1518.6 586.8C1522.8 585.5 1524.0 581.0 1531.1 583.0C1538.2 585.1 1537.0 589.7 1539.9 593.1" fill="none" stroke="#444" stroke-width="0.9" stroke-linecap="round" stroke-linejoin="round" />
<path d="M1615.2 586.8C1610.7 585.5 1609.0 581.0 1601.9 583.0C1594.8 585.1 1596.5 589.7 1593.8 593.1" fill="none" stroke="#444" stroke-width="0.9" stroke-linecap="round" stroke-linejoin="round" />
<path d="M1546.2 609.4C1547.0 604.8 1545.4 603.5 1548.7 595.6C1552.0 587.6 1553.7 588.9 1556.2 585.5" fill="none" stroke="#444" stroke-width="0.9" stroke-linecap="round" stroke-linejoin="round" />
<path d="M1587.6 609.4C1586.5 604.8 1587.7 603.5 1584.3 595.6C1581.0 587.6 1579.8 588.9 1577.5 585.5" fill="none" stroke="#444" stroke-width="0.9" stroke-linecap="round" stroke-linejoin="round" />
<path d="M1551.7 570.5C1553.6 575.5 1555.6 580.5 1557.5 585.5" fill="none" stroke="#444" stroke-width="0.9" stroke-linecap="round" stroke-linejoin="round" />
<path d="M1581.8 570.5C1580.0 575.5 1578.1 580.5 1576.3 585.5" fill="none" stroke="#444" stroke-width="0.9" stroke-linecap="round" stroke-linejoin="round" />
<path d="M1566.3 422.0C1566.1 433.1 1565.7 431.6 1565.7 455.1C1565.7 478.7 1566.1 480.2 1566.3 492.8" fill="none" stroke="#6e6e6e" stroke-width="2.4" stroke-linecap="round" stroke-linejoin="round" />
<path d="M1566.3 422.0C1566.1 433.1 1565.7 431.6 1565.7 455.1C1565.7 478.7 1566.1 480.2 1566.3 492.8" fill="none" stroke="#383838" stroke-width="0.9" stroke-linecap="round" stroke-linejoin="round" />
<path d="M1566.3 510.3C1566.3 516.2 1566.3 522.0 1566.3 527.9" fill="none" stroke="#555" stroke-width="1.2" stroke-linecap="round" stroke-linejoin="round" />
<path d="M1566.3 550.4C1566.4 562.1 1566.8 565.5 1566.8 585.5C1566.8 605.6 1566.4 602.3 1566.3 610.6" fill="none" stroke="#555" stroke-width="2.0" stroke-linecap="round" stroke-linejoin="round" />
<path d="M1566.3 550.4C1566.4 562.1 1566.8 565.5 1566.8 585.5C1566.8 605.6 1566.4 602.3 1566.3 610.6" fill="none" stroke="#2a2a2a" stroke-width="0.8" stroke-linecap="round" stroke-linejoin="round" />
<path d="M1536.2 535.4C1540.7 532.0 1541.2 533.4 1551.2 533.4C1561.2 533.4 1556.2 535.4 1566.3 535.4C1576.3 535.4 1571.3 533.4 1581.3 533.4C1591.3 533.4 1591.5 532.4 1596.3 535.4C1601.2 538.4 1599.2 541.2 1595.8 542.4C1592.5 543.6 1596.2 539.7 1586.3 538.9C1576.4 538.1 1579.6 539.9 1566.3 539.9C1552.9 539.9 1555.7 537.7 1546.2 538.9C1536.7 540.1 1541.0 544.6 1537.7 543.4C1534.3 542.2 1531.6 538.7 1536.2 535.4Z" fill="#555" />
<path d="M1560.2 527.9C1562.6 522.9 1562.1 525.4 1566.3 525.4C1570.4 525.4 1570.3 522.9 1572.8 527.9C1575.3 532.9 1574.3 529.5 1573.8 540.4C1573.3 551.3 1573.6 552.5 1571.3 560.5C1568.9 568.4 1569.8 564.2 1566.8 564.2C1563.7 564.2 1564.7 568.4 1562.2 560.5C1559.7 552.5 1559.9 551.3 1559.2 540.4C1558.6 529.5 1557.9 532.9 1560.2 527.9Z" fill="#3a3a3a" />
<ellipse cx="1548.7" cy="555.5" rx="12.0" ry="10.5" fill="#b4b4b4" />
<ellipse cx="1582.6" cy="556.7" rx="10.5" ry="12.0" fill="#b0b0b0" />
<path d="M1537.4 535.4C1536.3 538.7 1534.6 537.9 1534.2 545.4C1533.7 552.9 1533.6 551.3 1536.2 558.0C1538.7 564.6 1539.8 563.0 1541.7 565.5" fill="none" stroke="#3a3a3a" stroke-width="1.4" stroke-linecap="round" stroke-linejoin="round" />
<path d="M1595.8 536.6C1596.2 541.2 1597.5 539.2 1596.8 550.4C1596.2 561.7 1596.9 559.6 1593.8 570.5C1590.7 581.4 1589.7 578.9 1587.6 583.0" fill="none" stroke="#2e2e2e" stroke-width="2.4" stroke-linecap="round" stroke-linejoin="round" />
<path d="M1537.4 535.4C1547.0 534.7 1546.6 533.4 1566.3 533.4C1585.9 533.4 1586.3 534.7 1596.3 535.4" fill="none" stroke="#d8d8d8" stroke-width="0.9" stroke-linecap="round" stroke-linejoin="round" />
<path d="M1520.6 438.1C1523.3 435.4 1532.2 431.8 1536.2 429.6C1540.1 427.4 1539.6 424.9 1540.2 427.1C1540.8 429.2 1541.4 436.7 1539.2 440.1C1537.0 443.5 1532.4 443.5 1529.1 444.1C1525.8 444.7 1524.3 444.3 1522.6 443.1C1520.9 441.9 1517.9 440.8 1520.6 438.1Z" fill="#fafafa" /></g>
<g transform="translate(1866 501.500) scale(-0.738 0.738) translate(-1565.500 -228.500)" filter="url(#bl2)"><path d="M1525.5 149.4C1537.3 149.1 1533.8 148.7 1550.6 150.5C1567.3 152.2 1558.9 151.2 1575.7 154.6C1592.4 158.1 1584.7 155.3 1600.7 160.9C1616.8 166.5 1611.2 163.4 1623.7 171.4C1636.3 179.4 1631.1 175.2 1638.4 185.0C1645.7 194.7 1642.6 190.5 1645.7 200.6C1648.8 210.8 1648.1 205.5 1647.8 215.3C1647.4 225.0 1647.4 221.6 1644.7 229.9C1641.9 238.3 1643.6 234.8 1639.4 240.4C1635.3 246.0 1640.8 243.5 1632.1 246.6C1623.4 249.8 1625.1 249.4 1613.3 249.8C1601.4 250.1 1604.2 250.1 1596.6 247.7C1588.9 245.3 1594.3 243.2 1590.3 242.5C1586.2 241.8 1587.2 242.8 1584.4 245.6C1581.6 248.4 1585.4 247.3 1581.9 250.8C1578.4 254.4 1578.5 255.2 1574.0 256.3C1569.4 257.3 1571.3 252.3 1568.3 254.0C1565.4 255.6 1568.3 254.7 1565.2 261.3C1562.1 267.9 1564.5 265.5 1558.9 273.8C1553.3 282.2 1556.1 278.0 1548.5 286.4C1540.8 294.7 1543.6 292.7 1535.9 298.9C1528.3 305.2 1531.6 304.2 1525.5 305.2C1519.3 306.2 1523.1 306.9 1517.5 302.1C1511.9 297.2 1515.8 298.2 1508.7 290.6C1501.6 282.9 1503.9 286.0 1496.2 279.1C1488.5 272.1 1493.4 276.3 1485.7 269.7C1478.1 263.0 1480.2 266.9 1473.2 259.2C1466.2 251.5 1469.4 255.7 1464.8 246.6C1460.3 237.6 1461.7 242.5 1459.6 232.0C1457.5 221.6 1457.5 226.4 1458.5 215.3C1459.6 204.1 1458.5 209.0 1462.7 198.6C1466.9 188.1 1464.1 193.0 1471.1 183.9C1478.1 174.9 1473.9 179.7 1483.6 171.4C1493.4 163.0 1489.9 165.4 1500.4 158.8C1510.8 152.2 1506.6 154.6 1515.0 151.5C1523.4 148.4 1513.6 149.8 1525.5 149.4Z" fill="#505050" />
<path d="M1508.7 160.9C1520.7 155.9 1514.3 156.6 1529.6 154.6C1545.0 152.7 1538.0 153.5 1554.7 155.1C1571.5 156.6 1563.1 154.9 1579.8 159.2C1596.6 163.6 1589.9 160.5 1604.9 168.0C1620.0 175.5 1614.2 171.6 1625.0 181.8C1635.8 192.0 1632.2 186.7 1637.3 198.6C1642.5 210.4 1641.2 206.8 1640.5 217.4C1639.8 228.0 1641.5 224.1 1635.3 230.3C1629.0 236.6 1630.4 234.9 1621.7 236.2C1612.9 237.4 1618.9 234.1 1609.1 234.1C1599.4 234.1 1602.1 236.9 1592.4 236.2C1582.6 235.5 1589.6 234.1 1579.8 232.0C1570.1 229.9 1577.0 230.6 1563.1 229.9C1549.2 229.2 1552.0 231.3 1538.0 229.9C1524.1 228.5 1531.0 227.8 1521.3 225.7C1511.5 223.6 1516.4 222.9 1508.7 223.6C1501.1 224.3 1506.6 225.7 1498.3 227.8C1489.9 229.9 1493.1 231.0 1483.6 229.9C1474.2 228.9 1475.6 231.0 1470.0 224.7C1464.5 218.4 1466.4 220.9 1466.9 211.1C1467.4 201.3 1467.0 205.3 1471.5 195.4C1476.0 185.5 1473.1 190.0 1480.5 181.4C1487.9 172.8 1484.3 176.5 1493.7 169.7C1503.1 162.9 1496.7 165.9 1508.7 160.9Z" fill="#a4a4a4" />
<path d="M1592.4 238.3C1596.9 234.5 1598.7 237.2 1611.2 235.1C1623.7 233.1 1620.6 231.0 1630.0 232.0C1639.4 233.1 1638.7 233.5 1639.4 238.3C1640.1 243.0 1640.8 242.7 1632.1 246.2C1623.4 249.7 1624.8 248.6 1613.3 248.7C1601.8 248.9 1604.6 250.1 1597.6 246.6C1590.6 243.2 1587.9 242.1 1592.4 238.3Z" fill="#747474" />
<path d="M1465.9 229.9C1471.1 224.7 1474.2 228.2 1483.6 231.0C1493.1 233.8 1492.7 231.0 1494.1 238.3C1495.5 245.6 1493.4 246.6 1487.8 252.9C1482.2 259.2 1484.0 259.2 1477.4 257.1C1470.7 255.0 1471.8 255.7 1468.0 246.6C1464.1 237.6 1460.6 235.1 1465.9 229.9Z" fill="#6a6a6a" />
<path d="M1515.0 202.7C1518.8 194.5 1517.4 199.1 1526.5 194.8C1535.6 190.5 1530.0 192.3 1542.2 189.8C1554.4 187.3 1549.2 187.4 1563.1 187.3C1577.0 187.1 1571.3 187.1 1584.0 189.4C1596.7 191.6 1592.0 189.4 1601.2 194.0C1610.4 198.6 1606.7 195.5 1611.6 203.2C1616.5 210.8 1615.6 208.4 1615.8 217.0C1616.0 225.5 1617.3 223.9 1612.2 228.9C1607.2 233.9 1611.6 231.7 1600.7 232.0C1589.9 232.4 1596.6 231.3 1579.8 229.9C1563.1 228.5 1568.7 229.2 1550.6 227.8C1532.4 226.4 1537.3 228.5 1525.5 225.7C1513.6 222.9 1518.5 227.1 1515.0 219.5C1511.5 211.8 1511.2 211.0 1515.0 202.7Z" fill="#8a8a8a" />
<path d="M1535.9 221.6C1535.2 218.1 1535.2 216.9 1544.3 212.1C1553.3 207.4 1550.6 208.4 1563.1 207.3C1575.7 206.3 1571.1 206.4 1581.9 209.0C1592.7 211.7 1590.6 210.8 1595.5 215.3C1600.4 219.8 1600.4 219.1 1596.6 222.6C1592.7 226.1 1591.7 226.8 1584.0 225.7C1576.3 224.7 1581.9 222.3 1573.6 219.5C1565.2 216.7 1568.0 216.3 1558.9 217.4C1549.9 218.4 1554.0 221.2 1546.4 222.6C1538.7 224.0 1536.6 225.0 1535.9 221.6Z" fill="#404040" />
<path d="M1535.9 223.6C1539.4 218.6 1538.7 220.2 1546.4 217.8C1554.0 215.4 1551.3 215.4 1558.9 216.3C1566.6 217.2 1565.2 216.0 1569.4 220.5C1573.6 225.0 1573.6 224.7 1571.5 229.9C1569.4 235.1 1571.5 233.8 1563.1 236.2C1554.7 238.6 1555.4 238.3 1546.4 237.2C1537.3 236.2 1539.4 237.6 1535.9 233.1C1532.4 228.5 1532.4 228.7 1535.9 223.6Z" fill="#9c9c9c" />
<path d="M1526.5 220.5C1527.6 217.7 1525.1 217.0 1529.6 212.1C1534.2 207.3 1531.0 209.3 1540.1 205.9C1549.2 202.5 1545.0 203.5 1556.8 201.9C1568.7 200.3 1563.8 200.1 1575.7 201.1C1587.5 202.0 1583.5 201.1 1592.4 204.8C1601.3 208.5 1599.5 206.7 1602.4 212.1C1605.3 217.6 1604.5 217.9 1601.2 221.1C1597.8 224.4 1595.3 221.7 1592.4 222.0" fill="none" stroke="#e6e6e6" stroke-width="6.6" stroke-linecap="round" stroke-linejoin="round" />
<ellipse cx="1526.5" cy="219.5" rx="6.3" ry="5.4" fill="#e6e6e6" />
<path d="M1544.3 215.3C1549.2 213.5 1549.9 211.1 1558.9 210.1C1568.0 209.0 1565.5 207.6 1571.5 212.1C1577.4 216.7 1575.3 217.7 1576.7 223.6C1578.1 229.6 1576.0 227.8 1575.7 229.9" fill="none" stroke="#cfcfcf" stroke-width="1.6" stroke-linecap="round" stroke-linejoin="round" />
<path d="M1529.6 235.1C1534.5 234.5 1533.1 237.6 1544.3 238.3C1555.4 239.0 1551.3 239.3 1563.1 237.2C1575.0 235.1 1570.8 231.7 1579.8 232.0C1588.9 232.4 1588.9 234.1 1590.3 238.3C1591.7 242.5 1590.3 241.1 1584.0 244.6C1577.7 248.0 1577.7 248.7 1571.5 248.7C1565.2 248.7 1570.8 248.0 1565.2 244.6C1559.6 241.1 1563.8 239.0 1554.7 238.3C1545.7 237.6 1546.4 241.8 1538.0 242.5C1529.6 243.2 1532.4 242.8 1529.6 240.4C1526.9 237.9 1524.8 235.8 1529.6 235.1Z" fill="#2c2c2c" />
<path d="M1537.2 241.2C1541.6 236.1 1540.7 236.9 1546.4 234.9C1552.1 232.9 1553.4 232.3 1558.5 233.7C1563.6 235.0 1564.4 234.8 1565.6 240.0C1566.8 245.1 1566.0 245.6 1563.1 252.9C1560.2 260.3 1559.8 259.8 1554.7 267.6C1549.7 275.4 1549.6 274.8 1544.3 282.2C1538.9 289.6 1539.4 289.3 1534.7 295.2C1530.0 301.1 1530.7 302.8 1526.7 304.4C1522.7 305.9 1521.1 305.8 1519.6 301.0C1518.2 296.2 1519.7 294.7 1521.3 286.4C1522.8 278.0 1523.2 278.3 1525.5 269.7C1527.7 261.0 1526.5 261.6 1529.6 254.0C1532.8 246.4 1532.7 246.3 1537.2 241.2Z" fill="#d2d2d2" />
<path d="M1550.6 240.4C1548.5 246.0 1549.5 243.9 1544.3 257.1C1539.1 270.3 1541.1 265.8 1534.9 280.1C1528.6 294.4 1528.6 293.4 1525.5 300.0" fill="none" stroke="#dedede" stroke-width="2.2" stroke-linecap="round" stroke-linejoin="round" />
<path d="M1563.1 244.6C1561.7 251.5 1563.1 252.9 1558.9 265.5C1554.7 278.0 1553.3 276.6 1550.6 282.2" fill="none" stroke="#8a8a8a" stroke-width="1.2" stroke-linecap="round" stroke-linejoin="round" />
<path d="M1477.4 262.3C1477.4 263.7 1480.9 264.4 1487.8 269.7C1494.8 274.9 1491.3 272.1 1498.3 278.0C1505.2 283.9 1502.5 280.5 1508.7 287.4C1515.0 294.4 1513.5 299.3 1517.1 298.9C1520.7 298.6 1520.3 294.0 1519.6 286.4C1518.9 278.7 1521.4 280.1 1515.0 275.9C1508.6 271.7 1509.4 277.3 1500.4 273.8C1491.3 270.3 1495.5 269.3 1487.8 265.5C1480.2 261.6 1477.4 260.9 1477.4 262.3Z" fill="#383838" />
<ellipse cx="1508.3" cy="251.9" rx="22.2" ry="23.0" fill="#4a4a4a" />
<ellipse cx="1508.3" cy="251.9" rx="21.3" ry="22.2" fill="#9c9c9c" />
<path d="M1518.1 257.5C1513.2 254.9 1512.5 255.9 1503.4 249.5C1494.3 243.1 1495.1 242.0 1491.0 238.3" fill="none" stroke="#cfcfcf" stroke-width="1.1" stroke-linecap="round" stroke-linejoin="round" />
<path d="M1518.1 257.5C1514.7 253.6 1513.7 254.3 1507.9 245.8C1502.2 237.3 1503.2 236.6 1500.8 232.0" fill="none" stroke="#cfcfcf" stroke-width="1.1" stroke-linecap="round" stroke-linejoin="round" />
<path d="M1518.1 257.5C1516.6 253.0 1515.5 253.2 1513.6 243.9C1511.8 234.5 1512.9 234.3 1512.5 229.5" fill="none" stroke="#cfcfcf" stroke-width="1.1" stroke-linecap="round" stroke-linejoin="round" />
<path d="M1518.1 257.5C1518.7 253.9 1517.8 253.7 1519.7 246.7C1521.6 239.8 1522.4 240.0 1523.8 236.6" fill="none" stroke="#cfcfcf" stroke-width="1.1" stroke-linecap="round" stroke-linejoin="round" />
<path d="M1518.1 257.5C1513.0 257.4 1512.8 258.6 1502.7 257.0C1492.6 255.5 1492.8 254.3 1487.8 252.9" fill="none" stroke="#cfcfcf" stroke-width="1.1" stroke-linecap="round" stroke-linejoin="round" />
<path d="M1518.1 257.5C1514.1 259.8 1514.5 260.8 1505.9 264.3C1497.3 267.8 1496.9 266.8 1492.4 268.0" fill="none" stroke="#cfcfcf" stroke-width="1.1" stroke-linecap="round" stroke-linejoin="round" />
<path d="M1518.1 257.5C1516.1 260.8 1516.8 261.4 1511.9 267.4C1507.0 273.4 1506.3 272.8 1503.5 275.5" fill="none" stroke="#cfcfcf" stroke-width="1.1" stroke-linecap="round" stroke-linejoin="round" />
<path d="M1518.1 257.5C1518.1 260.3 1518.8 260.4 1518.1 265.8C1517.4 271.2 1516.7 271.2 1516.1 273.8" fill="none" stroke="#cfcfcf" stroke-width="1.1" stroke-linecap="round" stroke-linejoin="round" />
<path d="M1518.1 257.5C1519.4 256.6 1519.3 256.3 1522.1 254.7C1524.8 253.2 1525.0 253.5 1526.5 252.9" fill="none" stroke="#cfcfcf" stroke-width="1.1" stroke-linecap="round" stroke-linejoin="round" />
<path d="M1518.1 257.5C1510.7 249.9 1503.2 242.2 1495.8 234.5" fill="none" stroke="#6a6a6a" stroke-width="0.6" stroke-linecap="round" stroke-linejoin="round" />
<path d="M1518.1 257.5C1514.3 248.5 1510.5 239.4 1506.6 230.3" fill="none" stroke="#6a6a6a" stroke-width="0.6" stroke-linecap="round" stroke-linejoin="round" />
<path d="M1518.1 257.5C1518.2 249.0 1518.3 240.5 1518.4 232.0" fill="none" stroke="#6a6a6a" stroke-width="0.6" stroke-linecap="round" stroke-linejoin="round" />
<path d="M1518.1 257.5C1508.4 253.6 1498.6 249.6 1488.9 245.6" fill="none" stroke="#6a6a6a" stroke-width="0.6" stroke-linecap="round" stroke-linejoin="round" />
<path d="M1518.1 257.5C1508.6 258.6 1499.0 259.8 1489.5 260.9" fill="none" stroke="#6a6a6a" stroke-width="0.6" stroke-linecap="round" stroke-linejoin="round" />
<path d="M1518.1 257.5C1511.4 262.4 1504.6 267.3 1497.9 272.2" fill="none" stroke="#6a6a6a" stroke-width="0.6" stroke-linecap="round" stroke-linejoin="round" />
<path d="M1518.1 257.5C1515.4 263.7 1512.6 269.8 1509.8 275.9" fill="none" stroke="#6a6a6a" stroke-width="0.6" stroke-linecap="round" stroke-linejoin="round" />
<ellipse cx="1572.7" cy="252.9" rx="2.9" ry="3.1" fill="#f6f6f6" />
<ellipse cx="1579.8" cy="252.9" rx="2.9" ry="2.1" fill="#8a8a8a" />
<path d="M1515.0 162.6C1513.8 165.5 1509.9 166.2 1511.2 171.4C1512.6 176.5 1511.7 176.7 1519.2 178.1C1526.7 179.5 1528.9 176.4 1533.8 175.5" fill="none" stroke="#333" stroke-width="1.5" stroke-linecap="round" stroke-linejoin="round" />
<path d="M1530.1 159.2C1530.8 162.6 1533.1 163.0 1532.2 169.3C1531.2 175.5 1528.8 175.1 1527.1 178.1" fill="none" stroke="#333" stroke-width="1.5" stroke-linecap="round" stroke-linejoin="round" />
<path d="M1544.3 158.4C1543.0 162.0 1538.4 163.4 1540.5 169.3C1542.6 175.1 1544.3 176.0 1550.6 176.0C1556.8 176.0 1556.4 171.5 1559.3 169.3" fill="none" stroke="#333" stroke-width="1.5" stroke-linecap="round" stroke-linejoin="round" />
<path d="M1563.1 160.9C1565.3 164.4 1569.1 165.0 1569.8 171.4C1570.5 177.8 1566.7 177.2 1565.2 180.2" fill="none" stroke="#333" stroke-width="1.5" stroke-linecap="round" stroke-linejoin="round" />
<path d="M1580.3 163.0C1581.0 166.5 1578.3 167.7 1582.3 173.5C1586.4 179.2 1589.0 177.9 1592.4 180.2" fill="none" stroke="#333" stroke-width="1.5" stroke-linecap="round" stroke-linejoin="round" />
<path d="M1597.0 169.3C1598.4 172.8 1601.2 173.3 1601.2 179.7C1601.2 186.1 1598.4 185.6 1597.0 188.5" fill="none" stroke="#333" stroke-width="1.5" stroke-linecap="round" stroke-linejoin="round" />
<path d="M1611.6 177.6C1612.3 181.1 1610.2 183.1 1613.7 188.1C1617.2 193.1 1619.3 191.2 1622.1 192.7" fill="none" stroke="#333" stroke-width="1.5" stroke-linecap="round" stroke-linejoin="round" />
<path d="M1626.3 190.2C1625.6 194.4 1622.8 195.6 1624.2 202.7C1625.6 209.8 1628.4 208.6 1630.4 211.5" fill="none" stroke="#333" stroke-width="1.5" stroke-linecap="round" stroke-linejoin="round" />
<path d="M1495.4 175.1C1498.6 180.8 1498.4 183.1 1505.0 192.3C1511.5 201.5 1511.5 193.5 1515.0 202.7C1518.5 211.9 1515.3 214.2 1515.4 219.9" fill="none" stroke="#333" stroke-width="1.5" stroke-linecap="round" stroke-linejoin="round" />
<path d="M1471.5 209.4C1476.9 211.5 1476.0 212.2 1487.8 215.7C1499.7 219.2 1500.6 218.5 1507.1 219.9" fill="none" stroke="#333" stroke-width="1.5" stroke-linecap="round" stroke-linejoin="round" />
<path d="M1479.5 190.2C1483.8 193.7 1489.5 192.8 1492.4 200.6C1495.4 208.5 1489.6 209.3 1488.2 213.6" fill="none" stroke="#333" stroke-width="1.5" stroke-linecap="round" stroke-linejoin="round" />
<path d="M1630.0 219.5C1627.9 222.3 1629.3 223.6 1623.7 227.8C1618.2 232.0 1616.8 230.6 1613.3 232.0" fill="none" stroke="#333" stroke-width="1.5" stroke-linecap="round" stroke-linejoin="round" />
<path d="M1508.7 181.8C1511.5 184.6 1508.7 189.1 1517.1 190.2C1525.5 191.2 1528.3 186.7 1533.8 185.0" fill="none" stroke="#333" stroke-width="1.5" stroke-linecap="round" stroke-linejoin="round" />
<path d="M1554.7 181.8C1560.3 182.2 1563.1 180.1 1571.5 182.9C1579.8 185.7 1577.0 187.7 1579.8 190.2" fill="none" stroke="#333" stroke-width="1.5" stroke-linecap="round" stroke-linejoin="round" />
<path d="M1483.6 181.8C1486.1 184.3 1488.5 186.7 1491.0 189.1" fill="none" stroke="#333" stroke-width="1.5" stroke-linecap="round" stroke-linejoin="round" />
<path d="M1500.4 171.4C1499.7 174.9 1496.2 176.2 1498.3 181.8C1500.4 187.4 1503.9 186.0 1506.6 188.1" fill="none" stroke="#333" stroke-width="1.5" stroke-linecap="round" stroke-linejoin="round" />
<path d="M1538.0 165.1C1540.1 167.2 1542.2 169.3 1544.3 171.4" fill="none" stroke="#333" stroke-width="1.5" stroke-linecap="round" stroke-linejoin="round" />
<path d="M1573.6 167.2C1572.9 170.0 1569.4 170.7 1571.5 175.5C1573.6 180.4 1577.0 179.7 1579.8 181.8" fill="none" stroke="#333" stroke-width="1.5" stroke-linecap="round" stroke-linejoin="round" />
<path d="M1604.9 179.7C1607.0 183.9 1609.1 188.1 1611.2 192.3" fill="none" stroke="#333" stroke-width="1.5" stroke-linecap="round" stroke-linejoin="round" />
<path d="M1617.5 198.6C1621.0 199.2 1624.4 199.9 1627.9 200.6" fill="none" stroke="#333" stroke-width="1.5" stroke-linecap="round" stroke-linejoin="round" />
<path d="M1621.7 215.3C1625.1 216.7 1628.6 218.1 1632.1 219.5" fill="none" stroke="#333" stroke-width="1.5" stroke-linecap="round" stroke-linejoin="round" />
<path d="M1477.4 202.7C1480.2 204.8 1482.9 206.9 1485.7 209.0" fill="none" stroke="#333" stroke-width="1.5" stroke-linecap="round" stroke-linejoin="round" />
<path d="M1496.2 204.8C1498.3 207.6 1501.8 207.6 1502.5 213.2C1503.2 218.8 1499.7 218.8 1498.3 221.6" fill="none" stroke="#333" stroke-width="1.5" stroke-linecap="round" stroke-linejoin="round" />
<path d="M1525.5 181.8C1526.9 184.6 1528.3 187.4 1529.6 190.2" fill="none" stroke="#333" stroke-width="1.5" stroke-linecap="round" stroke-linejoin="round" />
<path d="M1590.3 188.1C1592.4 191.6 1591.7 193.7 1596.6 198.6C1601.4 203.4 1602.1 201.3 1604.9 202.7" fill="none" stroke="#333" stroke-width="1.5" stroke-linecap="round" stroke-linejoin="round" />
<path d="M1473.2 219.5C1476.7 220.9 1480.2 222.3 1483.6 223.6" fill="none" stroke="#333" stroke-width="1.5" stroke-linecap="round" stroke-linejoin="round" />
<path d="M1515.4 192.7C1521.6 190.2 1519.3 188.8 1533.8 185.2C1548.3 181.5 1542.2 181.8 1558.9 181.8C1575.7 181.8 1569.2 181.3 1584.0 185.2C1598.8 189.1 1593.4 186.1 1603.3 193.5C1613.2 200.9 1609.5 197.2 1613.7 207.3C1617.9 217.5 1615.1 218.5 1615.8 224.1" fill="none" stroke="#4a4a4a" stroke-width="1.4" stroke-linecap="round" stroke-linejoin="round" />
<path d="M1471.1 185.0C1476.7 180.4 1475.3 179.7 1487.8 171.4C1500.4 163.0 1493.4 166.0 1508.7 159.9C1524.1 153.7 1515.7 154.7 1533.8 153.0C1552.0 151.2 1543.6 152.0 1563.1 154.6C1582.6 157.3 1574.3 155.3 1592.4 160.9C1610.5 166.5 1603.5 163.0 1617.5 171.4C1631.4 179.7 1625.8 175.5 1634.2 186.0C1642.6 196.5 1639.1 191.6 1642.6 202.7C1646.1 213.9 1644.0 213.9 1644.7 219.5" fill="none" stroke="#707070" stroke-width="1.0" stroke-linecap="round" stroke-linejoin="round" /></g>
<rect x="1716" y="92" width="1" height="546" fill="#e8e8e8"/>
<rect x="1717" y="365" width="299" height="1" fill="#e8e8e8"/>
<rect x="1416" y="365" width="300" height="1" fill="#e8e8e8"/>
<g opacity="0.990">
<text x="1566" y="104" text-anchor="middle">S 129.00</text>
<text x="1712" y="104" text-anchor="end">127</text>
<text x="1420" y="232" text-anchor="start">P 122.66</text>
<text x="1712" y="232" text-anchor="end">A 158.66</text>
<text x="1566" y="359" text-anchor="middle">I  127.00</text>
<text x="1712" y="359" text-anchor="end">R 6.40</text>
<text x="1866" y="104" text-anchor="middle">S 129.00</text>
<text x="2012" y="104" text-anchor="end">128</text>
<text x="1720" y="232" text-anchor="start">R 146.59</text>
<text x="2012" y="232" text-anchor="end">L 133.79</text>
<text x="1866" y="359" text-anchor="middle">I  127.00</text>
<text x="2012" y="359" text-anchor="end">A 18.00</text>
<text x="1566" y="378" text-anchor="middle">A 146.00</text>
<text x="1712" y="378" text-anchor="end">127</text>
<text x="1420" y="505" text-anchor="start">R 147.58</text>
<text x="1712" y="505" text-anchor="end">L 134.78</text>
<text x="1566" y="632" text-anchor="middle">P 110.00</text>
<text x="1712" y="632" text-anchor="end">S 1.00</text>
<text x="1424" y="361">1</text><text x="1431.5" y="361">cm</text>
<path d="M1430 351.5h12" stroke="#f2f2f2" stroke-width="1"/><path d="M1430.4 352v1.800M1432.6 352v1M1434.9 352v1M1437.1 352v1M1439.4 352v1M1441.6 352v1.800" stroke="#f2f2f2" stroke-width=".8"/>
<text x="1724" y="361">1</text><text x="1731.5" y="361">cm</text>
<path d="M1730 351.5h12" stroke="#f2f2f2" stroke-width="1"/><path d="M1730.4 352v1.800M1732.6 352v1M1734.9 352v1M1737.1 352v1M1739.4 352v1M1741.6 352v1.800" stroke="#f2f2f2" stroke-width=".8"/>
<text x="1424" y="634">1</text><text x="1431.5" y="634">cm</text>
<path d="M1430 624.5h12" stroke="#f2f2f2" stroke-width="1"/><path d="M1430.4 625v1.800M1432.6 625v1M1434.9 625v1M1437.1 625v1M1439.4 625v1M1441.6 625v1.800" stroke="#f2f2f2" stroke-width=".8"/>
</g>
<path d="M1561.5 228.5h8M1565.5 224.5v8M1565.5 92v8M1565.5 357v8M1416 228.5h8M1708 228.5h8" stroke="#ff0000" stroke-width="1" fill="none"/>
<path d="M1861.5 228.5h8M1865.5 224.5v8M1865.5 92v8M1865.5 357v8M1717 228.5h8M2008 228.5h8" stroke="#ff0000" stroke-width="1" fill="none"/>
<path d="M1561.5 501.5h8M1565.5 497.5v8M1565.5 366v8M1565.5 630v8M1416 501.5h8M1708 501.5h8" stroke="#ff0000" stroke-width="1" fill="none"/>
<path d="M1416 366H1716V638H1713V368.500H1416Z" fill="#0000ff"/>
<rect x="1766" y="401.500" width="202" height="202" fill="none" stroke="#ff1c1c" stroke-width="2"/>
<path d="M1741 501.500H1993" stroke="#1414ff" stroke-width="2"/>
<path d="M1866 376V629" stroke="#18ff18" stroke-width="2"/>
</svg>
</div>
<!-- ---- info panels ---- -->
<div class="tbl" style="left:300px;top:629px;width:299px;height:192px">
 <div class="hd"><span>Cursor</span><i></i></div>
 <div class="row" style="top:14px"><span style="left:3.500px">RAS</span><span style="left:81px">6.40, 18.00, 1.00</span></div>
 <div class="row alt" style="top:26px"><span style="left:3.500px">TkReg ...brain)</span><span style="left:81px">1.00, 0.00, 1.00</span></div>
 <div class="row" style="top:38px"><span style="left:3.500px">MNI305 (brain)</span><span style="left:81px">0.70, -5.21, -4.54</span></div>
 <div class="row alt" style="top:50px"><span style="left:3.500px">brain</span><span style="left:81px">26</span><span style="left:161px">[127, 127, 128]</span></div>
</div>
<div class="tbl" style="left:601px;top:629px;width:299px;height:192px">
 <div class="hd"><span>Mouse</span><i></i></div>
 <div class="row" style="top:14px"><span style="left:3.500px">RAS</span><span style="left:81px">-21.46, -101.50, 1.00</span></div>
 <div class="row alt" style="top:26px"><span style="left:3.500px">TkReg ...brain)</span><span style="left:81px">-26.86, -119.50, 1.00</span></div>
 <div class="row" style="top:38px"><span style="left:3.500px">MNI305 (brain)</span><span style="left:81px">-28.98, -126.59, 14.70</span></div>
 <div class="row alt" style="top:50px"><span style="left:3.500px">brain</span><span style="left:81px">0</span><span style="left:161px">[155, 127, 9]</span></div>
</div>
<div class="abs" style="left:592px;top:626px;width:17px;height:1px;background:repeating-linear-gradient(90deg,#bdbdbd 0 1px,transparent 1px 3px)"></div>
<div class="abs" style="left:298px;top:443px;width:1px;height:17px;background:repeating-linear-gradient(180deg,#bdbdbd 0 1px,transparent 1px 3px)"></div>
</div>
</body>
</html>
